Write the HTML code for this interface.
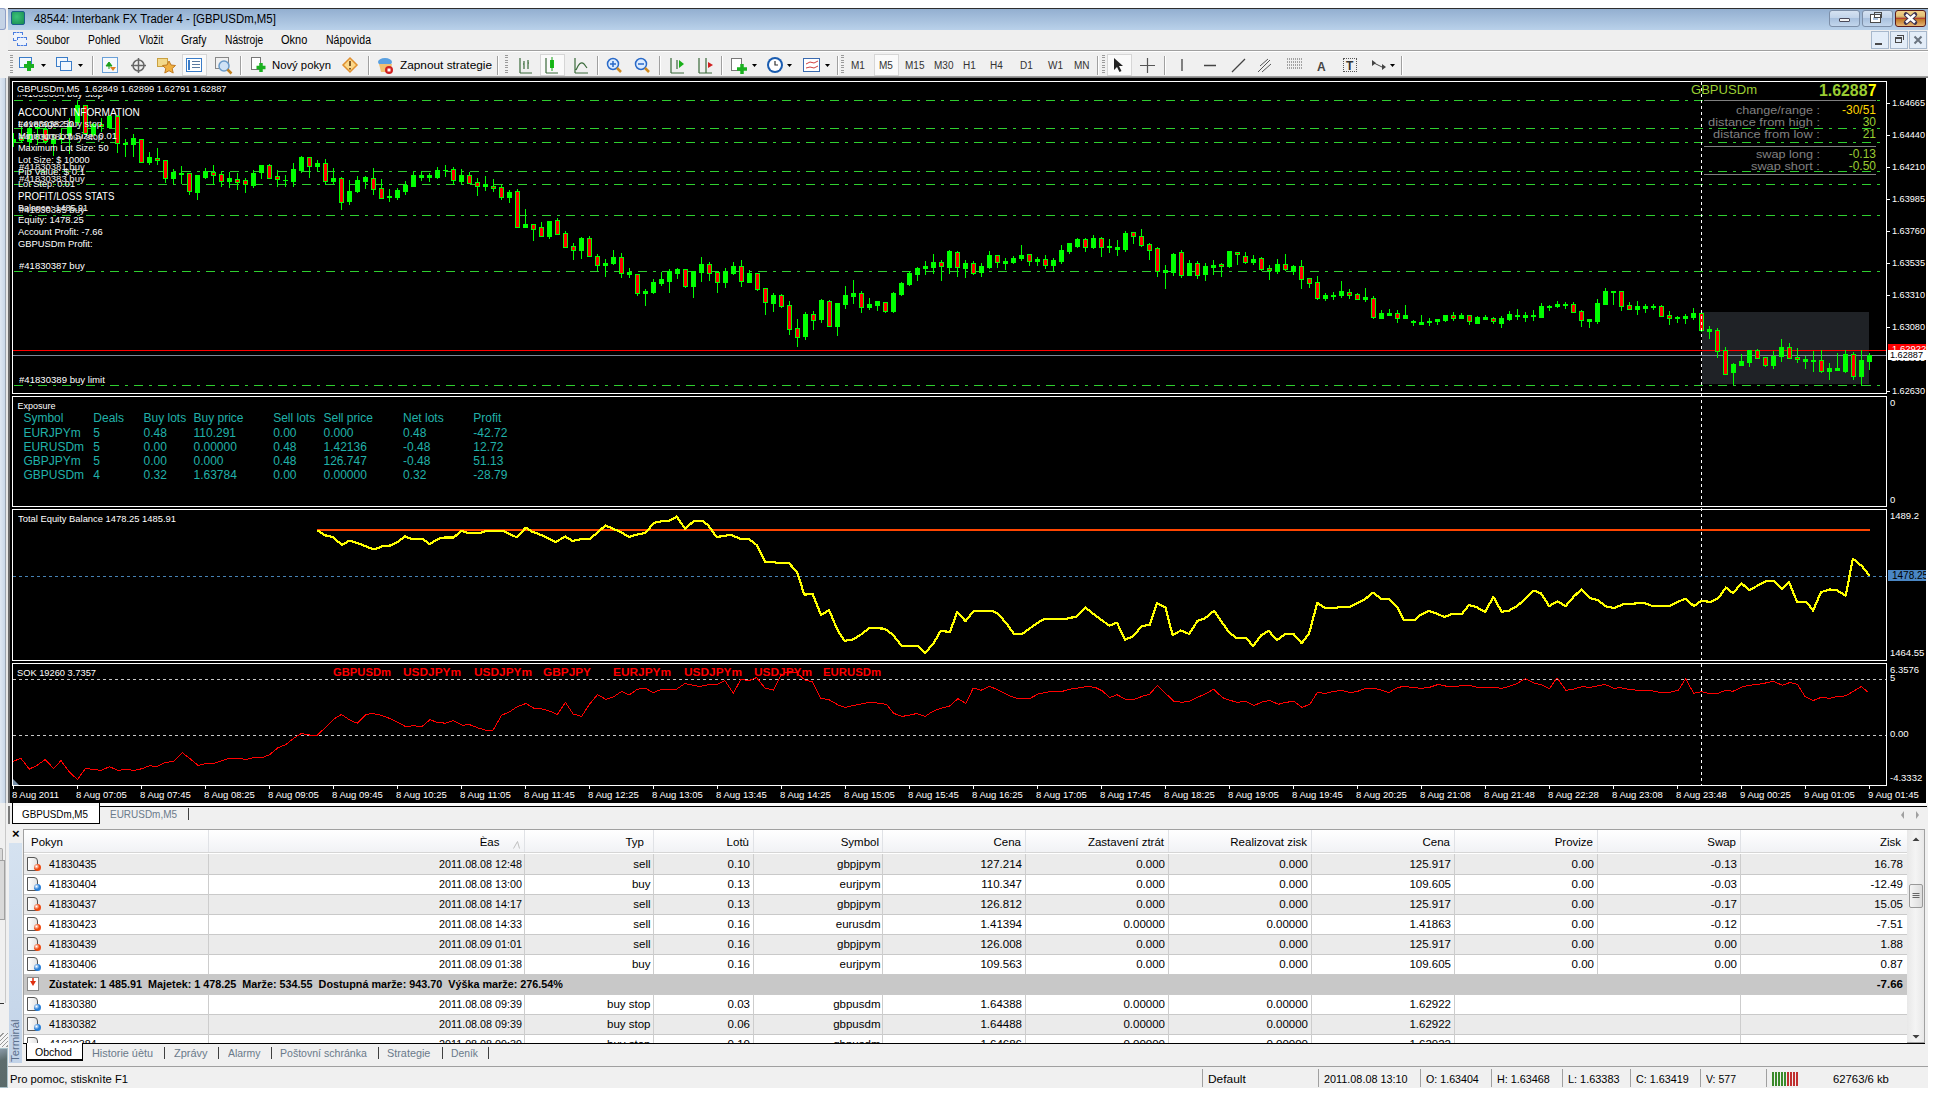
<!DOCTYPE html>
<html><head><meta charset="utf-8"><title>MT4</title><style>*{box-sizing:border-box}
html,body{margin:0;padding:0}
body{width:1936px;height:1096px;background:#fff;position:relative;overflow:hidden;font-family:"Liberation Sans",sans-serif;color:#000}
.a{position:absolute}
.t{position:absolute;white-space:pre;line-height:1;transform-origin:0 0}
svg{position:absolute;left:0;top:0;overflow:visible}
</style></head><body>
<div class="a" style="left:0px;top:8px;width:8px;height:1080px;background:#f0f0f0"></div>
<div class="a" style="left:0px;top:848px;width:3px;height:22px;background:#d8d8d8;border:1px solid #a8a8a8;border-left:none;border-radius:0 2px 2px 0"></div>
<div class="a" style="left:0px;top:1003px;width:4px;height:1px;background:#333"></div>
<div class="a" style="left:5px;top:803px;width:1px;height:200px;background:#c8c8c8"></div>
<div class="a" style="left:0px;top:8px;width:6px;height:22px;background:#c4d3e6;border:1px solid #8e9fc6;border-left:none;border-radius:0 3px 3px 0"></div>
<div class="a" style="left:0px;top:78px;width:5px;height:725px;background:linear-gradient(90deg,#dfe8f3,#c9d7e8)"></div>
<div class="a" style="left:5px;top:78px;width:1px;height:725px;background:#9aa4b0"></div>
<div class="a" style="left:6px;top:78px;width:2px;height:725px;background:#e6e6e6"></div>
<div class="a" style="left:8px;top:78px;width:2px;height:725px;background:#6a6a6a"></div>
<div class="a" style="left:0px;top:860px;width:5px;height:60px;background:#d9d9d9;border:1px solid #a0a0a0;border-left:none"></div>
<div class="a" style="left:0px;top:1033px;width:8px;height:14px;background:repeating-linear-gradient(135deg,#f4f4f4 0 2px,#9a9a9a 2px 3px)"></div>
<div class="a" style="left:0px;top:1048px;width:8px;height:40px;background:linear-gradient(160deg,#8a9aa8 0,#5d6d6d 30%,#5a6a6a 100%);border:1px solid #a8c0c8;border-left:none"></div>
<div class="a" style="left:8px;top:8px;width:1920px;height:1px;background:#2e2e2e"></div>
<div class="a" style="left:8px;top:9px;width:1920px;height:21px;background:linear-gradient(#93afd0,#b9d1ea)"></div>
<div class="a" style="left:11px;top:11px;width:14px;height:14px;background:radial-gradient(circle at 40% 40%,#3cc27a,#178a4e);border:1px solid #1c5f8a;border-radius:2px"></div>
<div class="t" style="left:34.00px;top:12.84px;font-size:12px;color:#000;transform:scaleX(0.9491);">48544: Interbank FX Trader 4 - [GBPUSDm,M5]</div>
<div class="a" style="left:1829px;top:10px;width:31px;height:17px;background:linear-gradient(#d5e2f1 0%,#c2d4ea 45%,#a9c1de 50%,#c3d6ec 100%);border:1px solid #7d8fa8;border-radius:3px"></div>
<div class="a" style="left:1839px;top:18px;width:11px;height:4px;background:#f4f4f4;border:1px solid #4a4a5a;border-radius:1px"></div>
<div class="a" style="left:1862px;top:10px;width:31px;height:17px;background:linear-gradient(#d5e2f1 0%,#c2d4ea 45%,#a9c1de 50%,#c3d6ec 100%);border:1px solid #7d8fa8;border-radius:3px"></div>
<div class="a" style="left:1871px;top:15px;width:9px;height:7px;border:2px solid #fff;outline:1px solid #4a4a4a"></div>
<div class="a" style="left:1874px;top:12px;width:8px;height:6px;border:1px solid #4a4a4a;background:transparent"></div>
<div class="a" style="left:1895px;top:10px;width:31px;height:17px;background:linear-gradient(#f0d08a 0%,#e6c37a 30%,#c8a868 42%,#b8402a 46%,#b8402a 52%,#c07828 56%,#d49850 80%,#e8b878 100%);border:1px solid #5a1a1a;border-radius:3px"></div>
<svg width="1936" height="1096"><path d="M1906 14.5 L1915 22.5 M1915 14.5 L1906 22.5" stroke="#3a3050" stroke-width="4.5" stroke-linecap="round"/><path d="M1906 14.5 L1915 22.5 M1915 14.5 L1906 22.5" stroke="#fff" stroke-width="2.6"/></svg>
<div class="a" style="left:8px;top:30px;width:1920px;height:20px;background:#efefef"></div>
<div class="a" style="left:8px;top:50px;width:1920px;height:1px;background:#a0a0a0"></div>
<div class="a" style="left:13px;top:32px;width:10px;height:9px;border:1px dashed #4a7de0;background:#eef3fb"></div>
<div class="a" style="left:17px;top:37px;width:10px;height:9px;border:1px dashed #4a7de0;background:#eef3fb"></div>
<div class="t" style="left:36.00px;top:34.34px;font-size:12px;color:#000;transform:scaleX(0.8657);">Soubor</div>
<div class="t" style="left:88.00px;top:34.34px;font-size:12px;color:#000;transform:scaleX(0.8618);">Pohled</div>
<div class="t" style="left:139.00px;top:34.34px;font-size:12px;color:#000;transform:scaleX(0.8281);">Vložit</div>
<div class="t" style="left:181.00px;top:34.34px;font-size:12px;color:#000;transform:scaleX(0.8624);">Grafy</div>
<div class="t" style="left:225.00px;top:34.34px;font-size:12px;color:#000;transform:scaleX(0.8549);">Nástroje</div>
<div class="t" style="left:281.00px;top:34.34px;font-size:12px;color:#000;transform:scaleX(0.9170);">Okno</div>
<div class="t" style="left:326.00px;top:34.34px;font-size:12px;color:#000;transform:scaleX(0.8760);">Nápovìda</div>
<div class="a" style="left:1871px;top:31px;width:18px;height:18px;background:#e3edf8;border:1px solid #a7b8cc"></div>
<div class="a" style="left:1890px;top:31px;width:18px;height:18px;background:#e3edf8;border:1px solid #a7b8cc"></div>
<div class="a" style="left:1909px;top:31px;width:18px;height:18px;background:#e3edf8;border:1px solid #a7b8cc"></div>
<div class="a" style="left:1875px;top:43px;width:7px;height:2px;background:#4a4a4a"></div>
<div class="a" style="left:1895px;top:37px;width:7px;height:6px;border:1px solid #4a4a4a;border-top-width:2px"></div>
<div class="a" style="left:1897px;top:35px;width:7px;height:5px;border:1px solid #4a4a4a;border-left:none;border-bottom:none"></div>
<svg width="1936" height="1096"><path d="M1914.5 36.5 L1921.5 43.5 M1921.5 36.5 L1914.5 43.5" stroke="#6a7480" stroke-width="2"/></svg>
<div class="a" style="left:8px;top:51px;width:1920px;height:1px;background:#fff"></div>
<div class="a" style="left:8px;top:52px;width:1920px;height:25px;background:#f0f0f0"></div>
<div class="a" style="left:8px;top:76px;width:1920px;height:2px;background:linear-gradient(#b0b0b0,#707070)"></div>
<div class="a" style="left:10px;top:55px;width:3px;height:20px;background:repeating-linear-gradient(#9a9a9a 0 1px,transparent 1px 2.5px)"></div>
<div class="a" style="left:19px;top:57px;width:13px;height:11px;border:1.5px solid #3a7cc8;background:#f2f7fd"></div>
<svg width="1936" height="1096"><path d="M29 61 v10 M24 66 h10" stroke="#19b01f" stroke-width="4"/></svg>
<svg width="1936" height="1096"><path d="M41 64 h5 l-2.5 3 z" fill="#000"/></svg>
<div class="a" style="left:56px;top:57px;width:12px;height:10px;border:1.5px solid #3a7cc8;background:#f2f7fd"></div>
<div class="a" style="left:60px;top:61px;width:12px;height:10px;border:1.5px solid #3a7cc8;background:#f2f7fd"></div>
<svg width="1936" height="1096"><path d="M78 64 h5 l-2.5 3 z" fill="#000"/></svg>
<div class="a" style="left:92px;top:56px;width:1px;height:19px;background:#a0a0a0"></div>
<div class="a" style="left:93px;top:56px;width:1px;height:19px;background:#fff"></div>
<div class="a" style="left:102px;top:57px;width:16px;height:16px;border:1.5px solid #6aa0d8;background:#f4f8fc"></div>
<svg width="1936" height="1096"><path d="M106 66 l3-4 l3 4 z M109 66 v3" fill="#1aa01a" stroke="#1aa01a"/><path d="M110 67 l3 4 l3-4 z" fill="#e08020"/></svg>
<svg width="1936" height="1096"><circle cx="138.5" cy="65.5" r="5.5" fill="none" stroke="#666" stroke-width="1.5"/><path d="M131 65.5 h15 M138.5 58 v15" stroke="#666" stroke-width="1.5"/></svg>
<div class="a" style="left:157px;top:58px;width:11px;height:9px;background:#f3d98a;border:1px solid #c9a040"></div>
<svg width="1936" height="1096"><path d="M169 61 l2 4 4.5 .5 -3.3 3 1 4.5 -4.2-2.3 -4.2 2.3 1-4.5 -3.3-3 4.5-.5z" fill="#f0b040" stroke="#c07a20" stroke-width="1"/></svg>
<div class="a" style="left:182px;top:54px;width:25px;height:22px;background:#fafafa;border:1px solid #d6d6d6"></div>
<div class="a" style="left:186px;top:58px;width:16px;height:14px;border:1.5px solid #3a7cc8;background:#fff"></div>
<div class="a" style="left:188px;top:60px;width:2px;height:10px;background:#3a7cc8"></div>
<svg width="1936" height="1096"><path d="M192 61.5 h8 M192 64.5 h8 M192 67.5 h8" stroke="#5a7aa0"/></svg>
<div class="a" style="left:215px;top:57px;width:14px;height:12px;border:1px solid #888;background:#f0f0f0"></div>
<svg width="1936" height="1096"><circle cx="224" cy="66" r="5" fill="#cfe2f5" stroke="#6a9ac8" stroke-width="1.5"/><path d="M227.5 69.5 l4 4" stroke="#c08020" stroke-width="2.5"/></svg>
<div class="a" style="left:240px;top:56px;width:1px;height:19px;background:#a0a0a0"></div>
<div class="a" style="left:241px;top:56px;width:1px;height:19px;background:#fff"></div>
<div class="a" style="left:251px;top:57px;width:10px;height:13px;border:1px solid #777;background:#fff"></div>
<svg width="1936" height="1096"><path d="M261 63 v9 M256.5 67.5 h9" stroke="#19b01f" stroke-width="3.5"/></svg>
<div class="t" style="left:272.00px;top:60.27px;font-size:11.5px;color:#000;transform:scaleX(0.9820);">Nový pokyn</div>
<svg width="1936" height="1096"><path d="M350 58 l7 7 -7 7 -7-7z" fill="#fbd88a" stroke="#e09030" stroke-width="1.5"/><path d="M350 61 v5 M350 68 v1.5" stroke="#603000" stroke-width="1.5"/></svg>
<div class="a" style="left:368px;top:56px;width:1px;height:19px;background:#a0a0a0"></div>
<div class="a" style="left:369px;top:56px;width:1px;height:19px;background:#fff"></div>
<svg width="1936" height="1096"><ellipse cx="385" cy="62" rx="7" ry="4" fill="#5aa0e0"/><path d="M379 64 l2 8 h9 l2-8z" fill="#f0c070"/><circle cx="389" cy="70" r="4" fill="#d02020"/><rect x="387.5" y="68.5" width="3" height="3" fill="#fff"/></svg>
<div class="t" style="left:400.00px;top:60.27px;font-size:11.5px;color:#000;transform:scaleX(1.0279);">Zapnout strategie</div>
<div class="a" style="left:497px;top:56px;width:1px;height:19px;background:#a0a0a0"></div>
<div class="a" style="left:498px;top:56px;width:1px;height:19px;background:#fff"></div>
<div class="a" style="left:505px;top:55px;width:3px;height:20px;background:repeating-linear-gradient(#9a9a9a 0 1px,transparent 1px 2.5px)"></div>
<svg width="1936" height="1096"><path d="M520 58 v15 M520 73 h12 M524 61 v8 M528 60 v9 M523 64 h1 M528 63 h1" stroke="#3a6a3a" stroke-width="1.2" fill="none"/></svg>
<div class="a" style="left:540px;top:54px;width:25px;height:22px;background:#fafafa;border:1px solid #d6d6d6"></div>
<svg width="1936" height="1096"><path d="M546 58 v15 M546 73 h12" stroke="#3a6a3a" stroke-width="1.2"/><rect x="550" y="60" width="4" height="8" fill="#19c019"/><path d="M552 57 v14" stroke="#19a019"/></svg>
<svg width="1936" height="1096"><path d="M575 58 v15 M575 73 h13 M576 70 q4-10 8-6 l3 4" stroke="#3a6a3a" stroke-width="1.2" fill="none"/></svg>
<div class="a" style="left:597px;top:56px;width:1px;height:19px;background:#a0a0a0"></div>
<div class="a" style="left:598px;top:56px;width:1px;height:19px;background:#fff"></div>
<svg width="1936" height="1096"><circle cx="613" cy="64" r="5.5" fill="#dcecff" stroke="#2a6ac8" stroke-width="1.5"/><path d="M610 64 h6 M613 61 v6" stroke="#2a6ac8" stroke-width="1.5"/><path d="M617 68 l4 4" stroke="#d08a20" stroke-width="2.5"/></svg>
<svg width="1936" height="1096"><circle cx="641" cy="64" r="5.5" fill="#dcecff" stroke="#2a6ac8" stroke-width="1.5"/><path d="M638 64 h6" stroke="#2a6ac8" stroke-width="1.5"/><path d="M645 68 l4 4" stroke="#d08a20" stroke-width="2.5"/></svg>
<div class="a" style="left:659px;top:56px;width:1px;height:19px;background:#a0a0a0"></div>
<div class="a" style="left:660px;top:56px;width:1px;height:19px;background:#fff"></div>
<svg width="1936" height="1096"><path d="M671 58 v15 M671 73 h13 M677 60 v9" stroke="#3a6a3a" stroke-width="1.2"/><path d="M679 60 l5 4 -5 4z" fill="#19b019"/></svg>
<svg width="1936" height="1096"><path d="M699 58 v15 M699 73 h13 M706 58 v15" stroke="#3a6a3a" stroke-width="1.2"/><path d="M713 65 l-5-3 v6z" fill="#d02020"/></svg>
<div class="a" style="left:721px;top:56px;width:1px;height:19px;background:#a0a0a0"></div>
<div class="a" style="left:722px;top:56px;width:1px;height:19px;background:#fff"></div>
<div class="a" style="left:731px;top:58px;width:11px;height:13px;border:1px solid #777;background:#fff"></div>
<svg width="1936" height="1096"><path d="M742 64 v10 M737 69 h10" stroke="#19b01f" stroke-width="3.5"/></svg>
<svg width="1936" height="1096"><path d="M752 64 h5 l-2.5 3 z" fill="#000"/></svg>
<svg width="1936" height="1096"><circle cx="775" cy="65" r="8" fill="#1a5cb0"/><circle cx="775" cy="65" r="6" fill="#fff"/><path d="M775 61 v4 h3" stroke="#333" stroke-width="1.2" fill="none"/></svg>
<svg width="1936" height="1096"><path d="M787 64 h5 l-2.5 3 z" fill="#000"/></svg>
<div class="a" style="left:803px;top:58px;width:17px;height:14px;border:1.5px solid #3a6ab0;background:#fff"></div>
<svg width="1936" height="1096"><path d="M806 64 l4-2 4 1 4-2 M806 68 l4-1 4 1 4-2" stroke="#d04040" fill="none"/></svg>
<svg width="1936" height="1096"><path d="M825 64 h5 l-2.5 3 z" fill="#000"/></svg>
<div class="a" style="left:837px;top:56px;width:1px;height:19px;background:#a0a0a0"></div>
<div class="a" style="left:838px;top:56px;width:1px;height:19px;background:#fff"></div>
<div class="a" style="left:841px;top:55px;width:3px;height:20px;background:repeating-linear-gradient(#9a9a9a 0 1px,transparent 1px 2.5px)"></div>
<div class="a" style="left:874px;top:54px;width:25px;height:22px;background:#fafafa;border:1px solid #d6d6d6"></div>
<div class="t" style="left:851.00px;top:60.53px;font-size:10px;color:#333;">M1</div>
<div class="t" style="left:879.00px;top:60.53px;font-size:10px;color:#333;">M5</div>
<div class="t" style="left:905.00px;top:60.53px;font-size:10px;color:#333;">M15</div>
<div class="t" style="left:934.00px;top:60.53px;font-size:10px;color:#333;">M30</div>
<div class="t" style="left:963.00px;top:60.53px;font-size:10px;color:#333;">H1</div>
<div class="t" style="left:990.00px;top:60.53px;font-size:10px;color:#333;">H4</div>
<div class="t" style="left:1020.00px;top:60.53px;font-size:10px;color:#333;">D1</div>
<div class="t" style="left:1048.00px;top:60.53px;font-size:10px;color:#333;">W1</div>
<div class="t" style="left:1074.00px;top:60.53px;font-size:10px;color:#333;">MN</div>
<div class="a" style="left:1097px;top:56px;width:1px;height:19px;background:#a0a0a0"></div>
<div class="a" style="left:1098px;top:56px;width:1px;height:19px;background:#fff"></div>
<div class="a" style="left:1102px;top:55px;width:3px;height:20px;background:repeating-linear-gradient(#9a9a9a 0 1px,transparent 1px 2.5px)"></div>
<div class="a" style="left:1107px;top:54px;width:25px;height:22px;background:#fafafa;border:1px solid #d6d6d6"></div>
<svg width="1936" height="1096"><path d="M1114 58 v12 l3-3 2.5 5 2-1 -2.5-5 h4z" fill="#222"/></svg>
<svg width="1936" height="1096"><path d="M1140 65.5 h15 M1147.5 58 v15" stroke="#555" stroke-width="1.2"/></svg>
<div class="a" style="left:1164px;top:56px;width:1px;height:19px;background:#a0a0a0"></div>
<div class="a" style="left:1165px;top:56px;width:1px;height:19px;background:#fff"></div>
<svg width="1936" height="1096"><path d="M1182 59 v12 M1204 65.5 h12 M1232 72 l13-13" stroke="#444" stroke-width="1.3"/><path d="M1258 72 l12-12 M1260 66 l8-7 M1262 72 l9-8" stroke="#555" stroke-width="1"/><path d="M1287 59 h15 M1287 62 h15 M1287 65 h15 M1287 68 h15" stroke="#555" stroke-width="1" stroke-dasharray="1 1"/></svg>
<div class="t" style="left:1317.00px;top:60.84px;font-size:12px;color:#444;font-weight:700;">A</div>
<div class="a" style="left:1343px;top:58px;width:14px;height:14px;border:1px dotted #555"></div>
<div class="t" style="left:1346.00px;top:59.84px;font-size:12px;color:#333;font-weight:700;">T</div>
<svg width="1936" height="1096"><path d="M1372 60 l4 3 -4 3z M1382 64 l4 3 -4 3z" fill="#444"/><path d="M1374 63 l8 4" stroke="#444"/></svg>
<svg width="1936" height="1096"><path d="M1390 64 h5 l-2.5 3 z" fill="#000"/></svg>
<div class="a" style="left:1401px;top:56px;width:1px;height:19px;background:#a0a0a0"></div>
<div class="a" style="left:1402px;top:56px;width:1px;height:19px;background:#fff"></div>
<div class="a" style="left:10px;top:78px;width:1916px;height:725px;background:#000"></div>
<div class="a" style="left:12px;top:81px;width:1875px;height:313px;border:1px solid #fff"></div>
<div class="a" style="left:12px;top:396px;width:1875px;height:111px;border:1px solid #fff"></div>
<div class="a" style="left:12px;top:509px;width:1875px;height:152px;border:1px solid #fff"></div>
<div class="a" style="left:12px;top:663px;width:1875px;height:123px;border:1px solid #fff"></div>
<svg width="1936" height="1096" shape-rendering="crispEdges"><rect x="1702" y="312" width="167" height="72" fill="#1f2226"/><line x1="14" y1="100.5" x2="1886" y2="100.5" stroke="#2fcf2f" stroke-width="1" stroke-dasharray="9 6 3 6"/><line x1="14" y1="128.5" x2="1886" y2="128.5" stroke="#2fcf2f" stroke-width="1" stroke-dasharray="9 6 3 6"/><line x1="14" y1="142.5" x2="1886" y2="142.5" stroke="#2fcf2f" stroke-width="1" stroke-dasharray="9 6 3 6"/><line x1="14" y1="171.5" x2="1886" y2="171.5" stroke="#2fcf2f" stroke-width="1" stroke-dasharray="9 6 3 6"/><line x1="14" y1="184.5" x2="1886" y2="184.5" stroke="#2fcf2f" stroke-width="1" stroke-dasharray="9 6 3 6"/><line x1="14" y1="215.5" x2="1886" y2="215.5" stroke="#2fcf2f" stroke-width="1" stroke-dasharray="9 6 3 6"/><line x1="14" y1="271.5" x2="1886" y2="271.5" stroke="#2fcf2f" stroke-width="1" stroke-dasharray="9 6 3 6"/><line x1="14" y1="385.5" x2="1886" y2="385.5" stroke="#2fcf2f" stroke-width="1" stroke-dasharray="9 6 3 6"/><rect x="13" y="350" width="1873" height="1" fill="#ff0000"/><rect x="13" y="355" width="1873" height="1" fill="#7d8796"/><rect x="13" y="133" width="1" height="14" fill="#00ff00"/><rect x="13" y="139" width="3" height="3" fill="#00ff00"/><rect x="21" y="127" width="1" height="16" fill="#00ff00"/><rect x="19" y="138" width="5" height="3" fill="#00ff00"/><rect x="20" y="139" width="3" height="1" fill="#ff0000"/><rect x="29" y="127" width="1" height="20" fill="#00ff00"/><rect x="27" y="128" width="5" height="14" fill="#00ff00"/><rect x="37" y="124" width="1" height="21" fill="#00ff00"/><rect x="35" y="127" width="5" height="2" fill="#00ff00"/><rect x="45" y="126" width="1" height="18" fill="#00ff00"/><rect x="43" y="129" width="5" height="13" fill="#00ff00"/><rect x="44" y="130" width="3" height="11" fill="#ff0000"/><rect x="53" y="134" width="1" height="22" fill="#00ff00"/><rect x="51" y="139" width="5" height="5" fill="#00ff00"/><rect x="61" y="128" width="1" height="16" fill="#00ff00"/><rect x="59" y="138" width="5" height="2" fill="#00ff00"/><rect x="69" y="118" width="1" height="36" fill="#00ff00"/><rect x="67" y="126" width="5" height="10" fill="#00ff00"/><rect x="77" y="100" width="1" height="26" fill="#00ff00"/><rect x="75" y="105" width="5" height="18" fill="#00ff00"/><rect x="85" y="105" width="1" height="29" fill="#00ff00"/><rect x="83" y="105" width="5" height="29" fill="#00ff00"/><rect x="84" y="106" width="3" height="27" fill="#ff0000"/><rect x="93" y="123" width="1" height="13" fill="#00ff00"/><rect x="91" y="124" width="5" height="11" fill="#00ff00"/><rect x="101" y="118" width="1" height="14" fill="#00ff00"/><rect x="99" y="124" width="5" height="3" fill="#00ff00"/><rect x="100" y="125" width="3" height="1" fill="#ff0000"/><rect x="109" y="115" width="1" height="14" fill="#00ff00"/><rect x="107" y="116" width="5" height="12" fill="#00ff00"/><rect x="117" y="115" width="1" height="38" fill="#00ff00"/><rect x="115" y="116" width="5" height="28" fill="#00ff00"/><rect x="116" y="117" width="3" height="26" fill="#ff0000"/><rect x="125" y="139" width="1" height="18" fill="#00ff00"/><rect x="123" y="143" width="5" height="2" fill="#00ff00"/><rect x="133" y="134" width="1" height="23" fill="#00ff00"/><rect x="131" y="138" width="5" height="7" fill="#00ff00"/><rect x="141" y="139" width="1" height="24" fill="#00ff00"/><rect x="139" y="139" width="5" height="24" fill="#00ff00"/><rect x="140" y="140" width="3" height="22" fill="#ff0000"/><rect x="149" y="152" width="1" height="13" fill="#00ff00"/><rect x="147" y="157" width="5" height="6" fill="#00ff00"/><rect x="157" y="148" width="1" height="17" fill="#00ff00"/><rect x="155" y="158" width="5" height="3" fill="#00ff00"/><rect x="156" y="159" width="3" height="1" fill="#ff0000"/><rect x="165" y="160" width="1" height="23" fill="#00ff00"/><rect x="163" y="160" width="5" height="19" fill="#00ff00"/><rect x="164" y="161" width="3" height="17" fill="#ff0000"/><rect x="173" y="169" width="1" height="15" fill="#00ff00"/><rect x="171" y="172" width="5" height="7" fill="#00ff00"/><rect x="181" y="166" width="1" height="18" fill="#00ff00"/><rect x="179" y="173" width="5" height="2" fill="#00ff00"/><rect x="189" y="173" width="1" height="22" fill="#00ff00"/><rect x="187" y="173" width="5" height="19" fill="#00ff00"/><rect x="188" y="174" width="3" height="17" fill="#ff0000"/><rect x="197" y="175" width="1" height="25" fill="#00ff00"/><rect x="195" y="175" width="5" height="18" fill="#00ff00"/><rect x="205" y="168" width="1" height="11" fill="#00ff00"/><rect x="203" y="171" width="5" height="7" fill="#00ff00"/><rect x="213" y="165" width="1" height="20" fill="#00ff00"/><rect x="211" y="172" width="5" height="4" fill="#00ff00"/><rect x="212" y="173" width="3" height="2" fill="#ff0000"/><rect x="221" y="171" width="1" height="16" fill="#00ff00"/><rect x="219" y="174" width="5" height="8" fill="#00ff00"/><rect x="220" y="175" width="3" height="6" fill="#ff0000"/><rect x="229" y="172" width="1" height="16" fill="#00ff00"/><rect x="227" y="178" width="5" height="4" fill="#00ff00"/><rect x="237" y="173" width="1" height="17" fill="#00ff00"/><rect x="235" y="179" width="5" height="4" fill="#00ff00"/><rect x="236" y="180" width="3" height="2" fill="#ff0000"/><rect x="245" y="178" width="1" height="15" fill="#00ff00"/><rect x="243" y="180" width="5" height="5" fill="#00ff00"/><rect x="244" y="181" width="3" height="3" fill="#ff0000"/><rect x="253" y="170" width="1" height="18" fill="#00ff00"/><rect x="251" y="173" width="5" height="13" fill="#00ff00"/><rect x="261" y="165" width="1" height="14" fill="#00ff00"/><rect x="259" y="165" width="5" height="8" fill="#00ff00"/><rect x="269" y="164" width="1" height="15" fill="#00ff00"/><rect x="267" y="165" width="5" height="14" fill="#00ff00"/><rect x="268" y="166" width="3" height="12" fill="#ff0000"/><rect x="277" y="170" width="1" height="17" fill="#00ff00"/><rect x="275" y="176" width="5" height="4" fill="#00ff00"/><rect x="276" y="177" width="3" height="2" fill="#ff0000"/><rect x="285" y="175" width="1" height="12" fill="#00ff00"/><rect x="283" y="180" width="5" height="1" fill="#00ff00"/><rect x="293" y="163" width="1" height="24" fill="#00ff00"/><rect x="291" y="169" width="5" height="13" fill="#00ff00"/><rect x="301" y="156" width="1" height="17" fill="#00ff00"/><rect x="299" y="157" width="5" height="14" fill="#00ff00"/><rect x="309" y="157" width="1" height="21" fill="#00ff00"/><rect x="307" y="157" width="5" height="10" fill="#00ff00"/><rect x="308" y="158" width="3" height="8" fill="#ff0000"/><rect x="317" y="160" width="1" height="11" fill="#00ff00"/><rect x="315" y="163" width="5" height="4" fill="#00ff00"/><rect x="325" y="159" width="1" height="26" fill="#00ff00"/><rect x="323" y="163" width="5" height="19" fill="#00ff00"/><rect x="324" y="164" width="3" height="17" fill="#ff0000"/><rect x="333" y="168" width="1" height="17" fill="#00ff00"/><rect x="331" y="178" width="5" height="4" fill="#00ff00"/><rect x="341" y="177" width="1" height="33" fill="#00ff00"/><rect x="339" y="178" width="5" height="25" fill="#00ff00"/><rect x="340" y="179" width="3" height="23" fill="#ff0000"/><rect x="349" y="180" width="1" height="25" fill="#00ff00"/><rect x="347" y="191" width="5" height="11" fill="#00ff00"/><rect x="357" y="176" width="1" height="17" fill="#00ff00"/><rect x="355" y="180" width="5" height="12" fill="#00ff00"/><rect x="365" y="176" width="1" height="13" fill="#00ff00"/><rect x="363" y="177" width="5" height="5" fill="#00ff00"/><rect x="373" y="168" width="1" height="27" fill="#00ff00"/><rect x="371" y="178" width="5" height="12" fill="#00ff00"/><rect x="372" y="179" width="3" height="10" fill="#ff0000"/><rect x="381" y="179" width="1" height="20" fill="#00ff00"/><rect x="379" y="188" width="5" height="11" fill="#00ff00"/><rect x="380" y="189" width="3" height="9" fill="#ff0000"/><rect x="389" y="189" width="1" height="13" fill="#00ff00"/><rect x="387" y="196" width="5" height="2" fill="#00ff00"/><rect x="397" y="188" width="1" height="12" fill="#00ff00"/><rect x="395" y="190" width="5" height="8" fill="#00ff00"/><rect x="405" y="181" width="1" height="14" fill="#00ff00"/><rect x="403" y="185" width="5" height="7" fill="#00ff00"/><rect x="413" y="171" width="1" height="16" fill="#00ff00"/><rect x="411" y="175" width="5" height="12" fill="#00ff00"/><rect x="421" y="171" width="1" height="10" fill="#00ff00"/><rect x="419" y="175" width="5" height="3" fill="#00ff00"/><rect x="429" y="173" width="1" height="9" fill="#00ff00"/><rect x="427" y="175" width="5" height="3" fill="#00ff00"/><rect x="437" y="167" width="1" height="12" fill="#00ff00"/><rect x="435" y="170" width="5" height="8" fill="#00ff00"/><rect x="445" y="165" width="1" height="12" fill="#00ff00"/><rect x="443" y="170" width="5" height="1" fill="#00ff00"/><rect x="453" y="167" width="1" height="18" fill="#00ff00"/><rect x="451" y="169" width="5" height="12" fill="#00ff00"/><rect x="452" y="170" width="3" height="10" fill="#ff0000"/><rect x="461" y="169" width="1" height="15" fill="#00ff00"/><rect x="459" y="175" width="5" height="7" fill="#00ff00"/><rect x="469" y="172" width="1" height="12" fill="#00ff00"/><rect x="467" y="175" width="5" height="9" fill="#00ff00"/><rect x="468" y="176" width="3" height="7" fill="#ff0000"/><rect x="477" y="178" width="1" height="18" fill="#00ff00"/><rect x="475" y="182" width="5" height="5" fill="#00ff00"/><rect x="476" y="183" width="3" height="3" fill="#ff0000"/><rect x="485" y="176" width="1" height="15" fill="#00ff00"/><rect x="483" y="184" width="5" height="3" fill="#00ff00"/><rect x="493" y="179" width="1" height="13" fill="#00ff00"/><rect x="491" y="186" width="5" height="3" fill="#00ff00"/><rect x="492" y="187" width="3" height="1" fill="#ff0000"/><rect x="501" y="185" width="1" height="15" fill="#00ff00"/><rect x="499" y="187" width="5" height="11" fill="#00ff00"/><rect x="500" y="188" width="3" height="9" fill="#ff0000"/><rect x="509" y="190" width="1" height="13" fill="#00ff00"/><rect x="507" y="192" width="5" height="6" fill="#00ff00"/><rect x="517" y="189" width="1" height="39" fill="#00ff00"/><rect x="515" y="191" width="5" height="37" fill="#00ff00"/><rect x="516" y="192" width="3" height="35" fill="#ff0000"/><rect x="525" y="209" width="1" height="19" fill="#00ff00"/><rect x="523" y="224" width="5" height="4" fill="#00ff00"/><rect x="533" y="224" width="1" height="17" fill="#00ff00"/><rect x="531" y="224" width="5" height="6" fill="#00ff00"/><rect x="532" y="225" width="3" height="4" fill="#ff0000"/><rect x="541" y="222" width="1" height="15" fill="#00ff00"/><rect x="539" y="227" width="5" height="10" fill="#00ff00"/><rect x="540" y="228" width="3" height="8" fill="#ff0000"/><rect x="549" y="221" width="1" height="18" fill="#00ff00"/><rect x="547" y="221" width="5" height="16" fill="#00ff00"/><rect x="557" y="218" width="1" height="17" fill="#00ff00"/><rect x="555" y="220" width="5" height="15" fill="#00ff00"/><rect x="556" y="221" width="3" height="13" fill="#ff0000"/><rect x="565" y="231" width="1" height="17" fill="#00ff00"/><rect x="563" y="233" width="5" height="15" fill="#00ff00"/><rect x="564" y="234" width="3" height="13" fill="#ff0000"/><rect x="573" y="243" width="1" height="17" fill="#00ff00"/><rect x="571" y="246" width="5" height="5" fill="#00ff00"/><rect x="572" y="247" width="3" height="3" fill="#ff0000"/><rect x="581" y="237" width="1" height="22" fill="#00ff00"/><rect x="579" y="238" width="5" height="13" fill="#00ff00"/><rect x="589" y="236" width="1" height="21" fill="#00ff00"/><rect x="587" y="238" width="5" height="19" fill="#00ff00"/><rect x="588" y="239" width="3" height="17" fill="#ff0000"/><rect x="597" y="254" width="1" height="17" fill="#00ff00"/><rect x="595" y="256" width="5" height="10" fill="#00ff00"/><rect x="596" y="257" width="3" height="8" fill="#ff0000"/><rect x="605" y="259" width="1" height="18" fill="#00ff00"/><rect x="603" y="263" width="5" height="3" fill="#00ff00"/><rect x="613" y="250" width="1" height="15" fill="#00ff00"/><rect x="611" y="257" width="5" height="7" fill="#00ff00"/><rect x="621" y="253" width="1" height="25" fill="#00ff00"/><rect x="619" y="257" width="5" height="17" fill="#00ff00"/><rect x="620" y="258" width="3" height="15" fill="#ff0000"/><rect x="629" y="268" width="1" height="10" fill="#00ff00"/><rect x="627" y="272" width="5" height="3" fill="#00ff00"/><rect x="637" y="274" width="1" height="22" fill="#00ff00"/><rect x="635" y="274" width="5" height="20" fill="#00ff00"/><rect x="636" y="275" width="3" height="18" fill="#ff0000"/><rect x="645" y="289" width="1" height="17" fill="#00ff00"/><rect x="643" y="291" width="5" height="3" fill="#00ff00"/><rect x="653" y="279" width="1" height="15" fill="#00ff00"/><rect x="651" y="282" width="5" height="11" fill="#00ff00"/><rect x="661" y="272" width="1" height="14" fill="#00ff00"/><rect x="659" y="279" width="5" height="5" fill="#00ff00"/><rect x="669" y="269" width="1" height="24" fill="#00ff00"/><rect x="667" y="271" width="5" height="11" fill="#00ff00"/><rect x="677" y="268" width="1" height="11" fill="#00ff00"/><rect x="675" y="269" width="5" height="5" fill="#00ff00"/><rect x="685" y="269" width="1" height="19" fill="#00ff00"/><rect x="683" y="269" width="5" height="18" fill="#00ff00"/><rect x="684" y="270" width="3" height="16" fill="#ff0000"/><rect x="693" y="271" width="1" height="27" fill="#00ff00"/><rect x="691" y="271" width="5" height="16" fill="#00ff00"/><rect x="701" y="257" width="1" height="25" fill="#00ff00"/><rect x="699" y="264" width="5" height="9" fill="#00ff00"/><rect x="709" y="262" width="1" height="19" fill="#00ff00"/><rect x="707" y="264" width="5" height="10" fill="#00ff00"/><rect x="708" y="265" width="3" height="8" fill="#ff0000"/><rect x="717" y="271" width="1" height="22" fill="#00ff00"/><rect x="715" y="272" width="5" height="11" fill="#00ff00"/><rect x="716" y="273" width="3" height="9" fill="#ff0000"/><rect x="725" y="268" width="1" height="20" fill="#00ff00"/><rect x="723" y="271" width="5" height="12" fill="#00ff00"/><rect x="733" y="262" width="1" height="13" fill="#00ff00"/><rect x="731" y="266" width="5" height="8" fill="#00ff00"/><rect x="741" y="260" width="1" height="27" fill="#00ff00"/><rect x="739" y="266" width="5" height="16" fill="#00ff00"/><rect x="740" y="267" width="3" height="14" fill="#ff0000"/><rect x="749" y="270" width="1" height="13" fill="#00ff00"/><rect x="747" y="273" width="5" height="10" fill="#00ff00"/><rect x="757" y="273" width="1" height="18" fill="#00ff00"/><rect x="755" y="273" width="5" height="17" fill="#00ff00"/><rect x="756" y="274" width="3" height="15" fill="#ff0000"/><rect x="765" y="288" width="1" height="27" fill="#00ff00"/><rect x="763" y="288" width="5" height="15" fill="#00ff00"/><rect x="764" y="289" width="3" height="13" fill="#ff0000"/><rect x="773" y="293" width="1" height="19" fill="#00ff00"/><rect x="771" y="295" width="5" height="9" fill="#00ff00"/><rect x="781" y="294" width="1" height="14" fill="#00ff00"/><rect x="779" y="295" width="5" height="12" fill="#00ff00"/><rect x="780" y="296" width="3" height="10" fill="#ff0000"/><rect x="789" y="301" width="1" height="34" fill="#00ff00"/><rect x="787" y="305" width="5" height="25" fill="#00ff00"/><rect x="788" y="306" width="3" height="23" fill="#ff0000"/><rect x="797" y="319" width="1" height="28" fill="#00ff00"/><rect x="795" y="328" width="5" height="10" fill="#00ff00"/><rect x="796" y="329" width="3" height="8" fill="#ff0000"/><rect x="805" y="312" width="1" height="28" fill="#00ff00"/><rect x="803" y="314" width="5" height="23" fill="#00ff00"/><rect x="813" y="311" width="1" height="19" fill="#00ff00"/><rect x="811" y="314" width="5" height="7" fill="#00ff00"/><rect x="812" y="315" width="3" height="5" fill="#ff0000"/><rect x="821" y="299" width="1" height="24" fill="#00ff00"/><rect x="819" y="300" width="5" height="20" fill="#00ff00"/><rect x="829" y="300" width="1" height="27" fill="#00ff00"/><rect x="827" y="301" width="5" height="26" fill="#00ff00"/><rect x="828" y="302" width="3" height="24" fill="#ff0000"/><rect x="837" y="303" width="1" height="33" fill="#00ff00"/><rect x="835" y="303" width="5" height="24" fill="#00ff00"/><rect x="845" y="286" width="1" height="23" fill="#00ff00"/><rect x="843" y="295" width="5" height="10" fill="#00ff00"/><rect x="853" y="280" width="1" height="24" fill="#00ff00"/><rect x="851" y="293" width="5" height="4" fill="#00ff00"/><rect x="861" y="291" width="1" height="22" fill="#00ff00"/><rect x="859" y="293" width="5" height="15" fill="#00ff00"/><rect x="860" y="294" width="3" height="13" fill="#ff0000"/><rect x="869" y="298" width="1" height="12" fill="#00ff00"/><rect x="867" y="304" width="5" height="4" fill="#00ff00"/><rect x="877" y="301" width="1" height="10" fill="#00ff00"/><rect x="875" y="301" width="5" height="5" fill="#00ff00"/><rect x="885" y="302" width="1" height="11" fill="#00ff00"/><rect x="883" y="302" width="5" height="10" fill="#00ff00"/><rect x="884" y="303" width="3" height="8" fill="#ff0000"/><rect x="893" y="292" width="1" height="21" fill="#00ff00"/><rect x="891" y="293" width="5" height="19" fill="#00ff00"/><rect x="901" y="282" width="1" height="14" fill="#00ff00"/><rect x="899" y="283" width="5" height="12" fill="#00ff00"/><rect x="909" y="271" width="1" height="15" fill="#00ff00"/><rect x="907" y="273" width="5" height="12" fill="#00ff00"/><rect x="917" y="267" width="1" height="14" fill="#00ff00"/><rect x="915" y="268" width="5" height="7" fill="#00ff00"/><rect x="925" y="261" width="1" height="14" fill="#00ff00"/><rect x="923" y="266" width="5" height="3" fill="#00ff00"/><rect x="933" y="254" width="1" height="20" fill="#00ff00"/><rect x="931" y="262" width="5" height="6" fill="#00ff00"/><rect x="941" y="260" width="1" height="21" fill="#00ff00"/><rect x="939" y="262" width="5" height="5" fill="#00ff00"/><rect x="940" y="263" width="3" height="3" fill="#ff0000"/><rect x="949" y="250" width="1" height="24" fill="#00ff00"/><rect x="947" y="251" width="5" height="17" fill="#00ff00"/><rect x="957" y="251" width="1" height="26" fill="#00ff00"/><rect x="955" y="252" width="5" height="16" fill="#00ff00"/><rect x="956" y="253" width="3" height="14" fill="#ff0000"/><rect x="965" y="260" width="1" height="18" fill="#00ff00"/><rect x="963" y="263" width="5" height="6" fill="#00ff00"/><rect x="973" y="261" width="1" height="14" fill="#00ff00"/><rect x="971" y="263" width="5" height="11" fill="#00ff00"/><rect x="972" y="264" width="3" height="9" fill="#ff0000"/><rect x="981" y="263" width="1" height="14" fill="#00ff00"/><rect x="979" y="266" width="5" height="7" fill="#00ff00"/><rect x="989" y="251" width="1" height="18" fill="#00ff00"/><rect x="987" y="255" width="5" height="13" fill="#00ff00"/><rect x="997" y="255" width="1" height="13" fill="#00ff00"/><rect x="995" y="255" width="5" height="8" fill="#00ff00"/><rect x="996" y="256" width="3" height="6" fill="#ff0000"/><rect x="1005" y="258" width="1" height="12" fill="#00ff00"/><rect x="1003" y="261" width="5" height="3" fill="#00ff00"/><rect x="1013" y="256" width="1" height="8" fill="#00ff00"/><rect x="1011" y="258" width="5" height="5" fill="#00ff00"/><rect x="1021" y="245" width="1" height="16" fill="#00ff00"/><rect x="1019" y="255" width="5" height="4" fill="#00ff00"/><rect x="1029" y="254" width="1" height="12" fill="#00ff00"/><rect x="1027" y="254" width="5" height="8" fill="#00ff00"/><rect x="1028" y="255" width="3" height="6" fill="#ff0000"/><rect x="1037" y="257" width="1" height="9" fill="#00ff00"/><rect x="1035" y="259" width="5" height="3" fill="#00ff00"/><rect x="1045" y="255" width="1" height="14" fill="#00ff00"/><rect x="1043" y="259" width="5" height="7" fill="#00ff00"/><rect x="1044" y="260" width="3" height="5" fill="#ff0000"/><rect x="1053" y="258" width="1" height="13" fill="#00ff00"/><rect x="1051" y="260" width="5" height="6" fill="#00ff00"/><rect x="1061" y="245" width="1" height="19" fill="#00ff00"/><rect x="1059" y="250" width="5" height="12" fill="#00ff00"/><rect x="1069" y="243" width="1" height="11" fill="#00ff00"/><rect x="1067" y="243" width="5" height="9" fill="#00ff00"/><rect x="1077" y="238" width="1" height="10" fill="#00ff00"/><rect x="1075" y="239" width="5" height="8" fill="#00ff00"/><rect x="1085" y="238" width="1" height="14" fill="#00ff00"/><rect x="1083" y="239" width="5" height="9" fill="#00ff00"/><rect x="1084" y="240" width="3" height="7" fill="#ff0000"/><rect x="1093" y="235" width="1" height="14" fill="#00ff00"/><rect x="1091" y="238" width="5" height="10" fill="#00ff00"/><rect x="1101" y="237" width="1" height="20" fill="#00ff00"/><rect x="1099" y="238" width="5" height="10" fill="#00ff00"/><rect x="1100" y="239" width="3" height="8" fill="#ff0000"/><rect x="1109" y="239" width="1" height="14" fill="#00ff00"/><rect x="1107" y="246" width="5" height="2" fill="#00ff00"/><rect x="1117" y="240" width="1" height="16" fill="#00ff00"/><rect x="1115" y="247" width="5" height="3" fill="#00ff00"/><rect x="1125" y="231" width="1" height="21" fill="#00ff00"/><rect x="1123" y="233" width="5" height="17" fill="#00ff00"/><rect x="1133" y="232" width="1" height="12" fill="#00ff00"/><rect x="1131" y="232" width="5" height="5" fill="#00ff00"/><rect x="1132" y="233" width="3" height="3" fill="#ff0000"/><rect x="1141" y="229" width="1" height="18" fill="#00ff00"/><rect x="1139" y="236" width="5" height="10" fill="#00ff00"/><rect x="1140" y="237" width="3" height="8" fill="#ff0000"/><rect x="1149" y="243" width="1" height="17" fill="#00ff00"/><rect x="1147" y="244" width="5" height="7" fill="#00ff00"/><rect x="1148" y="245" width="3" height="5" fill="#ff0000"/><rect x="1157" y="247" width="1" height="30" fill="#00ff00"/><rect x="1155" y="248" width="5" height="24" fill="#00ff00"/><rect x="1156" y="249" width="3" height="22" fill="#ff0000"/><rect x="1165" y="265" width="1" height="24" fill="#00ff00"/><rect x="1163" y="270" width="5" height="3" fill="#00ff00"/><rect x="1173" y="253" width="1" height="23" fill="#00ff00"/><rect x="1171" y="254" width="5" height="19" fill="#00ff00"/><rect x="1181" y="250" width="1" height="28" fill="#00ff00"/><rect x="1179" y="252" width="5" height="24" fill="#00ff00"/><rect x="1180" y="253" width="3" height="22" fill="#ff0000"/><rect x="1189" y="260" width="1" height="16" fill="#00ff00"/><rect x="1187" y="263" width="5" height="13" fill="#00ff00"/><rect x="1197" y="261" width="1" height="18" fill="#00ff00"/><rect x="1195" y="263" width="5" height="13" fill="#00ff00"/><rect x="1196" y="264" width="3" height="11" fill="#ff0000"/><rect x="1205" y="263" width="1" height="18" fill="#00ff00"/><rect x="1203" y="266" width="5" height="9" fill="#00ff00"/><rect x="1213" y="260" width="1" height="15" fill="#00ff00"/><rect x="1211" y="265" width="5" height="3" fill="#00ff00"/><rect x="1221" y="263" width="1" height="14" fill="#00ff00"/><rect x="1219" y="264" width="5" height="3" fill="#00ff00"/><rect x="1220" y="265" width="3" height="1" fill="#ff0000"/><rect x="1229" y="251" width="1" height="17" fill="#00ff00"/><rect x="1227" y="251" width="5" height="16" fill="#00ff00"/><rect x="1237" y="252" width="1" height="13" fill="#00ff00"/><rect x="1235" y="252" width="5" height="3" fill="#00ff00"/><rect x="1236" y="253" width="3" height="1" fill="#ff0000"/><rect x="1245" y="252" width="1" height="12" fill="#00ff00"/><rect x="1243" y="256" width="5" height="7" fill="#00ff00"/><rect x="1244" y="257" width="3" height="5" fill="#ff0000"/><rect x="1253" y="255" width="1" height="10" fill="#00ff00"/><rect x="1251" y="259" width="5" height="4" fill="#00ff00"/><rect x="1261" y="257" width="1" height="14" fill="#00ff00"/><rect x="1259" y="258" width="5" height="12" fill="#00ff00"/><rect x="1260" y="259" width="3" height="10" fill="#ff0000"/><rect x="1269" y="265" width="1" height="15" fill="#00ff00"/><rect x="1267" y="268" width="5" height="3" fill="#00ff00"/><rect x="1268" y="269" width="3" height="1" fill="#ff0000"/><rect x="1277" y="259" width="1" height="15" fill="#00ff00"/><rect x="1275" y="264" width="5" height="8" fill="#00ff00"/><rect x="1285" y="254" width="1" height="17" fill="#00ff00"/><rect x="1283" y="264" width="5" height="6" fill="#00ff00"/><rect x="1284" y="265" width="3" height="4" fill="#ff0000"/><rect x="1293" y="265" width="1" height="10" fill="#00ff00"/><rect x="1291" y="266" width="5" height="6" fill="#00ff00"/><rect x="1301" y="260" width="1" height="29" fill="#00ff00"/><rect x="1299" y="266" width="5" height="14" fill="#00ff00"/><rect x="1300" y="267" width="3" height="12" fill="#ff0000"/><rect x="1309" y="278" width="1" height="10" fill="#00ff00"/><rect x="1307" y="278" width="5" height="6" fill="#00ff00"/><rect x="1308" y="279" width="3" height="4" fill="#ff0000"/><rect x="1317" y="276" width="1" height="24" fill="#00ff00"/><rect x="1315" y="282" width="5" height="17" fill="#00ff00"/><rect x="1316" y="283" width="3" height="15" fill="#ff0000"/><rect x="1325" y="293" width="1" height="8" fill="#00ff00"/><rect x="1323" y="295" width="5" height="4" fill="#00ff00"/><rect x="1333" y="292" width="1" height="8" fill="#00ff00"/><rect x="1331" y="295" width="5" height="2" fill="#00ff00"/><rect x="1341" y="281" width="1" height="17" fill="#00ff00"/><rect x="1339" y="291" width="5" height="5" fill="#00ff00"/><rect x="1349" y="289" width="1" height="10" fill="#00ff00"/><rect x="1347" y="292" width="5" height="4" fill="#00ff00"/><rect x="1348" y="293" width="3" height="2" fill="#ff0000"/><rect x="1357" y="293" width="1" height="7" fill="#00ff00"/><rect x="1355" y="294" width="5" height="6" fill="#00ff00"/><rect x="1356" y="295" width="3" height="4" fill="#ff0000"/><rect x="1365" y="288" width="1" height="14" fill="#00ff00"/><rect x="1363" y="297" width="5" height="3" fill="#00ff00"/><rect x="1373" y="296" width="1" height="23" fill="#00ff00"/><rect x="1371" y="298" width="5" height="20" fill="#00ff00"/><rect x="1372" y="299" width="3" height="18" fill="#ff0000"/><rect x="1381" y="310" width="1" height="9" fill="#00ff00"/><rect x="1379" y="313" width="5" height="6" fill="#00ff00"/><rect x="1389" y="309" width="1" height="7" fill="#00ff00"/><rect x="1387" y="313" width="5" height="3" fill="#00ff00"/><rect x="1397" y="310" width="1" height="13" fill="#00ff00"/><rect x="1395" y="313" width="5" height="6" fill="#00ff00"/><rect x="1396" y="314" width="3" height="4" fill="#ff0000"/><rect x="1405" y="305" width="1" height="14" fill="#00ff00"/><rect x="1403" y="315" width="5" height="4" fill="#00ff00"/><rect x="1413" y="320" width="1" height="6" fill="#00ff00"/><rect x="1411" y="321" width="5" height="2" fill="#00ff00"/><rect x="1421" y="315" width="1" height="10" fill="#00ff00"/><rect x="1419" y="322" width="5" height="3" fill="#00ff00"/><rect x="1429" y="318" width="1" height="8" fill="#00ff00"/><rect x="1427" y="321" width="5" height="2" fill="#00ff00"/><rect x="1437" y="319" width="1" height="6" fill="#00ff00"/><rect x="1435" y="319" width="5" height="3" fill="#00ff00"/><rect x="1445" y="315" width="1" height="7" fill="#00ff00"/><rect x="1443" y="315" width="5" height="6" fill="#00ff00"/><rect x="1453" y="312" width="1" height="9" fill="#00ff00"/><rect x="1451" y="315" width="5" height="4" fill="#00ff00"/><rect x="1452" y="316" width="3" height="2" fill="#ff0000"/><rect x="1461" y="313" width="1" height="6" fill="#00ff00"/><rect x="1459" y="315" width="5" height="4" fill="#00ff00"/><rect x="1469" y="315" width="1" height="10" fill="#00ff00"/><rect x="1467" y="315" width="5" height="7" fill="#00ff00"/><rect x="1468" y="316" width="3" height="5" fill="#ff0000"/><rect x="1477" y="316" width="1" height="8" fill="#00ff00"/><rect x="1475" y="317" width="5" height="7" fill="#00ff00"/><rect x="1485" y="315" width="1" height="5" fill="#00ff00"/><rect x="1483" y="317" width="5" height="3" fill="#00ff00"/><rect x="1493" y="317" width="1" height="7" fill="#00ff00"/><rect x="1491" y="318" width="5" height="4" fill="#00ff00"/><rect x="1492" y="319" width="3" height="2" fill="#ff0000"/><rect x="1501" y="316" width="1" height="12" fill="#00ff00"/><rect x="1499" y="318" width="5" height="6" fill="#00ff00"/><rect x="1509" y="311" width="1" height="10" fill="#00ff00"/><rect x="1507" y="314" width="5" height="6" fill="#00ff00"/><rect x="1517" y="309" width="1" height="11" fill="#00ff00"/><rect x="1515" y="315" width="5" height="2" fill="#00ff00"/><rect x="1525" y="312" width="1" height="10" fill="#00ff00"/><rect x="1523" y="315" width="5" height="3" fill="#00ff00"/><rect x="1533" y="310" width="1" height="11" fill="#00ff00"/><rect x="1531" y="315" width="5" height="2" fill="#00ff00"/><rect x="1541" y="303" width="1" height="15" fill="#00ff00"/><rect x="1539" y="306" width="5" height="12" fill="#00ff00"/><rect x="1549" y="305" width="1" height="6" fill="#00ff00"/><rect x="1547" y="306" width="5" height="2" fill="#00ff00"/><rect x="1557" y="301" width="1" height="7" fill="#00ff00"/><rect x="1555" y="304" width="5" height="3" fill="#00ff00"/><rect x="1565" y="302" width="1" height="7" fill="#00ff00"/><rect x="1563" y="304" width="5" height="2" fill="#00ff00"/><rect x="1573" y="302" width="1" height="11" fill="#00ff00"/><rect x="1571" y="304" width="5" height="9" fill="#00ff00"/><rect x="1572" y="305" width="3" height="7" fill="#ff0000"/><rect x="1581" y="310" width="1" height="17" fill="#00ff00"/><rect x="1579" y="311" width="5" height="10" fill="#00ff00"/><rect x="1580" y="312" width="3" height="8" fill="#ff0000"/><rect x="1589" y="319" width="1" height="9" fill="#00ff00"/><rect x="1587" y="319" width="5" height="3" fill="#00ff00"/><rect x="1597" y="299" width="1" height="25" fill="#00ff00"/><rect x="1595" y="303" width="5" height="19" fill="#00ff00"/><rect x="1605" y="288" width="1" height="17" fill="#00ff00"/><rect x="1603" y="291" width="5" height="14" fill="#00ff00"/><rect x="1613" y="291" width="1" height="14" fill="#00ff00"/><rect x="1611" y="291" width="5" height="2" fill="#00ff00"/><rect x="1621" y="291" width="1" height="20" fill="#00ff00"/><rect x="1619" y="291" width="5" height="16" fill="#00ff00"/><rect x="1620" y="292" width="3" height="14" fill="#ff0000"/><rect x="1629" y="302" width="1" height="8" fill="#00ff00"/><rect x="1627" y="305" width="5" height="5" fill="#00ff00"/><rect x="1628" y="306" width="3" height="3" fill="#ff0000"/><rect x="1637" y="301" width="1" height="14" fill="#00ff00"/><rect x="1635" y="306" width="5" height="4" fill="#00ff00"/><rect x="1645" y="304" width="1" height="9" fill="#00ff00"/><rect x="1643" y="306" width="5" height="3" fill="#00ff00"/><rect x="1653" y="304" width="1" height="6" fill="#00ff00"/><rect x="1651" y="306" width="5" height="2" fill="#00ff00"/><rect x="1661" y="305" width="1" height="12" fill="#00ff00"/><rect x="1659" y="306" width="5" height="11" fill="#00ff00"/><rect x="1660" y="307" width="3" height="9" fill="#ff0000"/><rect x="1669" y="311" width="1" height="14" fill="#00ff00"/><rect x="1667" y="315" width="5" height="4" fill="#00ff00"/><rect x="1668" y="316" width="3" height="2" fill="#ff0000"/><rect x="1677" y="316" width="1" height="7" fill="#00ff00"/><rect x="1675" y="317" width="5" height="2" fill="#00ff00"/><rect x="1685" y="314" width="1" height="10" fill="#00ff00"/><rect x="1683" y="316" width="5" height="3" fill="#00ff00"/><rect x="1693" y="308" width="1" height="12" fill="#00ff00"/><rect x="1691" y="313" width="5" height="5" fill="#00ff00"/><rect x="1701" y="312" width="1" height="20" fill="#00ff00"/><rect x="1699" y="313" width="5" height="18" fill="#00ff00"/><rect x="1700" y="314" width="3" height="16" fill="#ff0000"/><rect x="1709" y="326" width="1" height="13" fill="#00ff00"/><rect x="1707" y="329" width="5" height="3" fill="#00ff00"/><rect x="1717" y="328" width="1" height="30" fill="#00ff00"/><rect x="1715" y="330" width="5" height="22" fill="#00ff00"/><rect x="1716" y="331" width="3" height="20" fill="#ff0000"/><rect x="1725" y="347" width="1" height="28" fill="#00ff00"/><rect x="1723" y="350" width="5" height="25" fill="#00ff00"/><rect x="1724" y="351" width="3" height="23" fill="#ff0000"/><rect x="1733" y="363" width="1" height="22" fill="#00ff00"/><rect x="1731" y="364" width="5" height="9" fill="#00ff00"/><rect x="1741" y="354" width="1" height="12" fill="#00ff00"/><rect x="1739" y="361" width="5" height="5" fill="#00ff00"/><rect x="1749" y="350" width="1" height="17" fill="#00ff00"/><rect x="1747" y="350" width="5" height="13" fill="#00ff00"/><rect x="1757" y="349" width="1" height="10" fill="#00ff00"/><rect x="1755" y="350" width="5" height="9" fill="#00ff00"/><rect x="1756" y="351" width="3" height="7" fill="#ff0000"/><rect x="1765" y="357" width="1" height="10" fill="#00ff00"/><rect x="1763" y="357" width="5" height="9" fill="#00ff00"/><rect x="1764" y="358" width="3" height="7" fill="#ff0000"/><rect x="1773" y="351" width="1" height="18" fill="#00ff00"/><rect x="1771" y="356" width="5" height="10" fill="#00ff00"/><rect x="1781" y="339" width="1" height="23" fill="#00ff00"/><rect x="1779" y="347" width="5" height="10" fill="#00ff00"/><rect x="1789" y="343" width="1" height="16" fill="#00ff00"/><rect x="1787" y="347" width="5" height="12" fill="#00ff00"/><rect x="1788" y="348" width="3" height="10" fill="#ff0000"/><rect x="1797" y="348" width="1" height="15" fill="#00ff00"/><rect x="1795" y="357" width="5" height="3" fill="#00ff00"/><rect x="1796" y="358" width="3" height="1" fill="#ff0000"/><rect x="1805" y="356" width="1" height="13" fill="#00ff00"/><rect x="1803" y="359" width="5" height="3" fill="#00ff00"/><rect x="1813" y="351" width="1" height="21" fill="#00ff00"/><rect x="1811" y="360" width="5" height="2" fill="#00ff00"/><rect x="1821" y="350" width="1" height="23" fill="#00ff00"/><rect x="1819" y="360" width="5" height="12" fill="#00ff00"/><rect x="1820" y="361" width="3" height="10" fill="#ff0000"/><rect x="1829" y="363" width="1" height="17" fill="#00ff00"/><rect x="1827" y="368" width="5" height="4" fill="#00ff00"/><rect x="1837" y="353" width="1" height="18" fill="#00ff00"/><rect x="1835" y="368" width="5" height="3" fill="#00ff00"/><rect x="1845" y="350" width="1" height="23" fill="#00ff00"/><rect x="1843" y="354" width="5" height="18" fill="#00ff00"/><rect x="1853" y="352" width="1" height="28" fill="#00ff00"/><rect x="1851" y="354" width="5" height="23" fill="#00ff00"/><rect x="1852" y="355" width="3" height="21" fill="#ff0000"/><rect x="1861" y="350" width="1" height="36" fill="#00ff00"/><rect x="1859" y="360" width="5" height="17" fill="#00ff00"/><rect x="1869" y="353" width="1" height="17" fill="#00ff00"/><rect x="1867" y="355" width="5" height="7" fill="#00ff00"/><line x1="1701.5" y1="82" x2="1701.5" y2="785" stroke="#fff" stroke-width="1" stroke-dasharray="3 3"/><rect x="1704" y="100" width="172" height="1" fill="#808080"/><rect x="1704" y="146" width="172" height="1" fill="#808080"/><rect x="1704" y="174" width="172" height="1" fill="#808080"/><rect x="1887" y="103" width="3" height="1" fill="#fff"/><rect x="1887" y="135" width="3" height="1" fill="#fff"/><rect x="1887" y="167" width="3" height="1" fill="#fff"/><rect x="1887" y="199" width="3" height="1" fill="#fff"/><rect x="1887" y="231" width="3" height="1" fill="#fff"/><rect x="1887" y="263" width="3" height="1" fill="#fff"/><rect x="1887" y="295" width="3" height="1" fill="#fff"/><rect x="1887" y="327" width="3" height="1" fill="#fff"/><rect x="1887" y="391" width="3" height="1" fill="#fff"/><rect x="13" y="786" width="1" height="3" fill="#fff"/><rect x="77" y="786" width="1" height="3" fill="#fff"/><rect x="141" y="786" width="1" height="3" fill="#fff"/><rect x="205" y="786" width="1" height="3" fill="#fff"/><rect x="269" y="786" width="1" height="3" fill="#fff"/><rect x="333" y="786" width="1" height="3" fill="#fff"/><rect x="397" y="786" width="1" height="3" fill="#fff"/><rect x="461" y="786" width="1" height="3" fill="#fff"/><rect x="525" y="786" width="1" height="3" fill="#fff"/><rect x="589" y="786" width="1" height="3" fill="#fff"/><rect x="653" y="786" width="1" height="3" fill="#fff"/><rect x="717" y="786" width="1" height="3" fill="#fff"/><rect x="781" y="786" width="1" height="3" fill="#fff"/><rect x="845" y="786" width="1" height="3" fill="#fff"/><rect x="909" y="786" width="1" height="3" fill="#fff"/><rect x="973" y="786" width="1" height="3" fill="#fff"/><rect x="1037" y="786" width="1" height="3" fill="#fff"/><rect x="1101" y="786" width="1" height="3" fill="#fff"/><rect x="1165" y="786" width="1" height="3" fill="#fff"/><rect x="1229" y="786" width="1" height="3" fill="#fff"/><rect x="1293" y="786" width="1" height="3" fill="#fff"/><rect x="1357" y="786" width="1" height="3" fill="#fff"/><rect x="1421" y="786" width="1" height="3" fill="#fff"/><rect x="1485" y="786" width="1" height="3" fill="#fff"/><rect x="1549" y="786" width="1" height="3" fill="#fff"/><rect x="1613" y="786" width="1" height="3" fill="#fff"/><rect x="1677" y="786" width="1" height="3" fill="#fff"/><rect x="1741" y="786" width="1" height="3" fill="#fff"/><rect x="1805" y="786" width="1" height="3" fill="#fff"/><rect x="1869" y="786" width="1" height="3" fill="#fff"/></svg>
<div class="t" style="left:1892.00px;top:98.46px;font-size:9.5px;color:#fff;transform:scaleX(0.9610);">1.64665</div>
<div class="t" style="left:1892.00px;top:130.46px;font-size:9.5px;color:#fff;transform:scaleX(0.9610);">1.64440</div>
<div class="t" style="left:1892.00px;top:162.46px;font-size:9.5px;color:#fff;transform:scaleX(0.9610);">1.64210</div>
<div class="t" style="left:1892.00px;top:194.46px;font-size:9.5px;color:#fff;transform:scaleX(0.9610);">1.63985</div>
<div class="t" style="left:1892.00px;top:226.46px;font-size:9.5px;color:#fff;transform:scaleX(0.9610);">1.63760</div>
<div class="t" style="left:1892.00px;top:258.46px;font-size:9.5px;color:#fff;transform:scaleX(0.9610);">1.63535</div>
<div class="t" style="left:1892.00px;top:290.46px;font-size:9.5px;color:#fff;transform:scaleX(0.9610);">1.63310</div>
<div class="t" style="left:1892.00px;top:322.46px;font-size:9.5px;color:#fff;transform:scaleX(0.9610);">1.63080</div>
<div class="t" style="left:1892.00px;top:386.46px;font-size:9.5px;color:#fff;transform:scaleX(0.9610);">1.62630</div>
<div class="a" style="left:1888px;top:356px;width:38px;height:7px;overflow:hidden"><div class="t" style="left:3px;top:-3px;font-size:9.5px;color:#fff">1.62855</div></div>
<div class="a" style="left:1888px;top:344px;width:38px;height:6px;background:#ff0000;overflow:hidden"><div class="t" style="left:4px;top:0px;font-size:9.5px;color:#fff">1.62922</div></div>
<div class="a" style="left:1888px;top:350px;width:38px;height:10px;background:#fff"></div>
<div class="t" style="left:1890.00px;top:350.46px;font-size:9.5px;color:#000;transform:scaleX(0.9610);">1.62887</div>
<div class="a" style="left:14px;top:95px;width:200px;height:5px;overflow:hidden"><div class="t" style="left:3px;top:-6.5px;font-size:9.5px;color:#fff">#41830384 buy stop</div></div>
<div class="t" style="left:17.00px;top:85.38px;font-size:9px;color:#fff;transform:scaleX(1.0313);">GBPUSDm,M5  1.62849 1.62899 1.62791 1.62887</div>
<div class="t" style="left:18.00px;top:106.61px;font-size:10.5px;color:#fff;transform:scaleX(0.9565);">ACCOUNT INFORMATION</div>
<div class="t" style="left:18.00px;top:119.46px;font-size:9.5px;color:#fff;transform:scaleX(1.0097);">Leverage: 50</div>
<div class="t" style="left:18.00px;top:118.96px;font-size:9.5px;color:#eee;transform:scaleX(0.9756);">#41830382 buy stop</div>
<div class="t" style="left:18.00px;top:131.36px;font-size:9.5px;color:#fff;transform:scaleX(0.9974);">Minimum Lot Size: 0.01</div>
<div class="t" style="left:19.00px;top:131.96px;font-size:9.5px;color:#ddd;transform:scaleX(0.9756);">#41830380 buy stop</div>
<div class="t" style="left:18.00px;top:143.46px;font-size:9.5px;color:#fff;transform:scaleX(0.9630);">Maximum Lot Size: 50</div>
<div class="t" style="left:18.00px;top:155.46px;font-size:9.5px;color:#fff;transform:scaleX(0.9669);">Lot Size: $ 10000</div>
<div class="t" style="left:19.00px;top:161.96px;font-size:9.5px;color:#eee;transform:scaleX(1.0029);">#41830381 buy</div>
<div class="t" style="left:18.00px;top:167.46px;font-size:9.5px;color:#fff;transform:scaleX(1.0095);">Pip Value: $ 0.1</div>
<div class="t" style="left:19.00px;top:173.96px;font-size:9.5px;color:#eee;transform:scaleX(1.0029);">#41830383 buy</div>
<div class="t" style="left:18.00px;top:179.46px;font-size:9.5px;color:#fff;transform:scaleX(0.9635);">Lot Step: 0.01</div>
<div class="t" style="left:18.00px;top:190.61px;font-size:10.5px;color:#fff;transform:scaleX(0.9214);">PROFIT/LOSS STATS</div>
<div class="t" style="left:18.00px;top:203.46px;font-size:9.5px;color:#fff;transform:scaleX(0.9466);">Balance: 1485.91</div>
<div class="t" style="left:19.00px;top:204.96px;font-size:9.5px;color:#eee;transform:scaleX(1.0029);">#41830385 buy</div>
<div class="t" style="left:18.00px;top:215.46px;font-size:9.5px;color:#fff;transform:scaleX(0.9951);">Equity: 1478.25</div>
<div class="t" style="left:18.00px;top:227.46px;font-size:9.5px;color:#fff;transform:scaleX(0.9841);">Account Profit: -7.66</div>
<div class="t" style="left:18.00px;top:239.46px;font-size:9.5px;color:#fff;transform:scaleX(0.9869);">GBPUSDm Profit:</div>
<div class="t" style="left:19.00px;top:261.46px;font-size:9.5px;color:#fff;transform:scaleX(1.0029);">#41830387 buy</div>
<div class="t" style="left:19.00px;top:375.46px;font-size:9.5px;color:#fff;transform:scaleX(1.0090);">#41830389 buy limit</div>
<div class="t" style="left:1691.00px;top:84.02px;font-size:12.5px;color:#9acd32;transform:scaleX(1.0443);">GBPUSDm</div>
<div class="t" style="left:1819.00px;top:83.26px;font-size:16px;color:#9acd32;font-weight:700;transform:scaleX(0.9911);">1.6288</div>
<div class="t" style="left:1867.50px;top:83.26px;font-size:16px;color:#ffff00;font-weight:700;transform:scaleX(0.9552);">7</div>
<div class="t" style="left:1736.00px;top:105.19px;font-size:11px;color:#808080;transform:scaleX(1.1446);">change/range :</div>
<div class="t" style="left:1841.97px;top:104.34px;font-size:12px;color:#ffd700;">-30/51</div>
<div class="t" style="left:1708.00px;top:117.19px;font-size:11px;color:#808080;transform:scaleX(1.1668);">distance from high :</div>
<div class="t" style="left:1862.65px;top:116.34px;font-size:12px;color:#9acd32;">30</div>
<div class="t" style="left:1713.20px;top:129.19px;font-size:11px;color:#808080;transform:scaleX(1.1647);">distance from low :</div>
<div class="t" style="left:1862.65px;top:128.34px;font-size:12px;color:#9acd32;">21</div>
<div class="t" style="left:1756.00px;top:149.19px;font-size:11px;color:#808080;transform:scaleX(1.1502);">swap long :</div>
<div class="t" style="left:1848.65px;top:148.34px;font-size:12px;color:#9acd32;">-0.13</div>
<div class="t" style="left:1751.10px;top:161.19px;font-size:11px;color:#808080;transform:scaleX(1.1618);">swap short :</div>
<div class="t" style="left:1848.65px;top:160.34px;font-size:12px;color:#9acd32;">-0.50</div>
<div class="t" style="left:17.50px;top:401.88px;font-size:9px;color:#fff;">Exposure</div>
<div class="t" style="left:23.40px;top:412.34px;font-size:12px;color:#20b2aa;">Symbol</div>
<div class="t" style="left:93.30px;top:412.34px;font-size:12px;color:#20b2aa;">Deals</div>
<div class="t" style="left:143.50px;top:412.34px;font-size:12px;color:#20b2aa;">Buy lots</div>
<div class="t" style="left:193.50px;top:412.34px;font-size:12px;color:#20b2aa;">Buy price</div>
<div class="t" style="left:273.20px;top:412.34px;font-size:12px;color:#20b2aa;">Sell lots</div>
<div class="t" style="left:323.50px;top:412.34px;font-size:12px;color:#20b2aa;">Sell price</div>
<div class="t" style="left:403.00px;top:412.34px;font-size:12px;color:#20b2aa;">Net lots</div>
<div class="t" style="left:473.30px;top:412.34px;font-size:12px;color:#20b2aa;">Profit</div>
<div class="t" style="left:23.40px;top:427.34px;font-size:12px;color:#20b2aa;">EURJPYm</div>
<div class="t" style="left:93.30px;top:427.34px;font-size:12px;color:#20b2aa;">5</div>
<div class="t" style="left:143.50px;top:427.34px;font-size:12px;color:#20b2aa;">0.48</div>
<div class="t" style="left:193.50px;top:427.34px;font-size:12px;color:#20b2aa;">110.291</div>
<div class="t" style="left:273.20px;top:427.34px;font-size:12px;color:#20b2aa;">0.00</div>
<div class="t" style="left:323.50px;top:427.34px;font-size:12px;color:#20b2aa;">0.000</div>
<div class="t" style="left:403.00px;top:427.34px;font-size:12px;color:#20b2aa;">0.48</div>
<div class="t" style="left:473.30px;top:427.34px;font-size:12px;color:#20b2aa;">-42.72</div>
<div class="t" style="left:23.40px;top:441.34px;font-size:12px;color:#20b2aa;">EURUSDm</div>
<div class="t" style="left:93.30px;top:441.34px;font-size:12px;color:#20b2aa;">5</div>
<div class="t" style="left:143.50px;top:441.34px;font-size:12px;color:#20b2aa;">0.00</div>
<div class="t" style="left:193.50px;top:441.34px;font-size:12px;color:#20b2aa;">0.00000</div>
<div class="t" style="left:273.20px;top:441.34px;font-size:12px;color:#20b2aa;">0.48</div>
<div class="t" style="left:323.50px;top:441.34px;font-size:12px;color:#20b2aa;">1.42136</div>
<div class="t" style="left:403.00px;top:441.34px;font-size:12px;color:#20b2aa;">-0.48</div>
<div class="t" style="left:473.30px;top:441.34px;font-size:12px;color:#20b2aa;">12.72</div>
<div class="t" style="left:23.40px;top:455.34px;font-size:12px;color:#20b2aa;">GBPJPYm</div>
<div class="t" style="left:93.30px;top:455.34px;font-size:12px;color:#20b2aa;">5</div>
<div class="t" style="left:143.50px;top:455.34px;font-size:12px;color:#20b2aa;">0.00</div>
<div class="t" style="left:193.50px;top:455.34px;font-size:12px;color:#20b2aa;">0.000</div>
<div class="t" style="left:273.20px;top:455.34px;font-size:12px;color:#20b2aa;">0.48</div>
<div class="t" style="left:323.50px;top:455.34px;font-size:12px;color:#20b2aa;">126.747</div>
<div class="t" style="left:403.00px;top:455.34px;font-size:12px;color:#20b2aa;">-0.48</div>
<div class="t" style="left:473.30px;top:455.34px;font-size:12px;color:#20b2aa;">51.13</div>
<div class="t" style="left:23.40px;top:469.34px;font-size:12px;color:#20b2aa;">GBPUSDm</div>
<div class="t" style="left:93.30px;top:469.34px;font-size:12px;color:#20b2aa;">4</div>
<div class="t" style="left:143.50px;top:469.34px;font-size:12px;color:#20b2aa;">0.32</div>
<div class="t" style="left:193.50px;top:469.34px;font-size:12px;color:#20b2aa;">1.63784</div>
<div class="t" style="left:273.20px;top:469.34px;font-size:12px;color:#20b2aa;">0.00</div>
<div class="t" style="left:323.50px;top:469.34px;font-size:12px;color:#20b2aa;">0.00000</div>
<div class="t" style="left:403.00px;top:469.34px;font-size:12px;color:#20b2aa;">0.32</div>
<div class="t" style="left:473.30px;top:469.34px;font-size:12px;color:#20b2aa;">-28.79</div>
<div class="t" style="left:1890.00px;top:398.46px;font-size:9.5px;color:#fff;">0</div>
<div class="t" style="left:1890.00px;top:495.46px;font-size:9.5px;color:#fff;">0</div>
<div class="t" style="left:17.50px;top:513.96px;font-size:9.5px;color:#fff;transform:scaleX(0.9873);">Total Equity Balance 1478.25 1485.91</div>
<svg width="1936" height="1096" shape-rendering="crispEdges"><line x1="13" y1="576.5" x2="1886" y2="576.5" stroke="#4682b4" stroke-width="1" stroke-dasharray="3 3"/><rect x="317" y="529" width="1553" height="2" fill="#ff4500"/><polyline points="317.2,530.2 324.5,535.2 332.7,536.9 342,545.1 349.3,540.6 357.5,543.1 372,548.8 376.1,548.8 382.3,546.2 390.6,545.5 397.8,542 405,536.4 411.2,538.9 422.6,538.9 429.8,544.1 438.1,538.9 444.3,537.5 453.6,537.5 461.9,530.7 467,532.7 480.5,532.7 485.6,531.3 493.9,530.7 503.2,530.7 516.6,537.3 525.9,527.6 532.1,531.7 543.5,535.8 555.9,542 565.2,536.4 572.4,541 582.7,538.9 590,538.9 605.5,525.5 619.9,531.7 629.2,536.9 636.4,534.8 645.7,532.7 654,522.8 661.2,521.4 669.5,520.7 676.7,516.6 685,528.6 694.3,520.7 702.6,520.7 708.3,525.5 716.5,536.9 722.7,536.2 731,534.8 740.3,538.9 748.6,538.9 756.8,545.1 765.1,561.7 773.3,562.1 778.5,563.1 788.8,563.1 797.1,572 804.3,594.7 812.6,593.7 820.9,615 829.1,610.2 837.4,629.8 844.6,640.8 852.9,639.5 861.2,634.4 869.4,627.8 877.7,628.2 884.9,628.8 893.2,635 901.4,645.7 908.7,645.7 918,645.7 925.2,653 933.5,643.3 940.7,630.9 950,631.9 957.2,611.7 965.5,621.2 973.8,610.8 983.1,610.8 991.3,610.8 997.5,613.3 1005.8,622.6 1014,634 1022.3,634 1030.6,627.8 1038.8,622 1045,618.9 1065.7,618.9 1077.1,616.4 1085.3,607.5 1092.6,613.3 1099.3,618.5 1109.6,625.7 1116.9,622.6 1125.1,639.8 1133.4,636 1141.7,626.1 1149.9,624.7 1157.1,603 1165.4,607.5 1172.6,635 1180.9,630.5 1189.2,634 1197.4,621 1204.7,618.5 1214,610.8 1222.2,622.6 1229.5,632.9 1236.7,638.1 1246,638.1 1253.2,646 1261.5,635 1268.7,630.9 1277,640.2 1285.2,634 1293.5,634 1301.8,643.3 1309,633.6 1317.3,603 1324.5,607.7 1336.9,607.7 1339,606.7 1350.3,606.7 1357.6,603 1364.8,599.3 1373.1,592.6 1381.3,598.8 1388.6,598.8 1397.9,608.1 1404,620.1 1414.4,620.1 1420.6,614.8 1428.9,610.8 1436.1,613.3 1444.3,617 1452.6,613.9 1461.9,613.9 1469.1,605 1476.4,607.1 1484.6,611.7 1485.2,611.9 1493.4,596.8 1501.7,611.9 1508.9,610.6 1517.2,606.1 1525.5,598.4 1533.7,590.6 1541,593.3 1549.2,606.1 1557.5,601.3 1565.7,606.1 1574,596.4 1581.2,589.5 1589.5,597.8 1597.8,600.3 1606,606.5 1614.3,608.1 1622.6,604.4 1630.8,604 1639.1,603 1644.3,603 1651.5,605.7 1670.1,605.7 1677.3,601.9 1685.6,598.8 1693.8,606.1 1701.1,600.9 1710.4,601.9 1718.6,597.8 1725.9,587.5 1733.1,593.3 1741.4,583.3 1749.6,590.2 1757.9,585.4 1766.2,581.3 1774.4,581.3 1781.7,588.9 1788.9,581.9 1797.1,601.9 1806.4,601.9 1813.1,610.6 1820.9,592.2 1829.2,589.5 1836.4,590 1845.7,595.7 1852.9,558.6 1862.2,566.4 1869.5,575.7" fill="none" stroke="#ffff00" stroke-width="2.2" stroke-linejoin="round" shape-rendering="crispEdges"/></svg>
<div class="t" style="left:1890.00px;top:510.96px;font-size:9.5px;color:#fff;">1489.2</div>
<div class="a" style="left:1888px;top:570px;width:38px;height:11px;background:#4a86c4;overflow:hidden"><div class="t" style="left:4px;top:1.3px;font-size:10px;color:#000">1478.25</div></div>
<div class="t" style="left:1890.00px;top:648.46px;font-size:9.5px;color:#fff;">1464.55</div>
<div class="t" style="left:17.00px;top:667.96px;font-size:9.5px;color:#fff;transform:scaleX(0.9775);">SOK 19260 3.7357</div>
<div class="t" style="left:333.00px;top:667.27px;font-size:11.5px;color:#ff0000;font-weight:700;transform:scaleX(0.9760);">GBPUSDm</div>
<div class="t" style="left:403.00px;top:667.27px;font-size:11.5px;color:#ff0000;font-weight:700;transform:scaleX(1.0313);">USDJPYm</div>
<div class="t" style="left:473.60px;top:667.27px;font-size:11.5px;color:#ff0000;font-weight:700;transform:scaleX(1.0313);">USDJPYm</div>
<div class="t" style="left:543.00px;top:667.27px;font-size:11.5px;color:#ff0000;font-weight:700;transform:scaleX(1.0288);">GBPJPY</div>
<div class="t" style="left:613.00px;top:667.27px;font-size:11.5px;color:#ff0000;font-weight:700;transform:scaleX(1.0313);">EURJPYm</div>
<div class="t" style="left:683.60px;top:667.27px;font-size:11.5px;color:#ff0000;font-weight:700;transform:scaleX(1.0313);">USDJPYm</div>
<div class="t" style="left:753.60px;top:667.27px;font-size:11.5px;color:#ff0000;font-weight:700;transform:scaleX(1.0313);">USDJPYm</div>
<div class="t" style="left:823.00px;top:667.27px;font-size:11.5px;color:#ff0000;font-weight:700;transform:scaleX(0.9866);">EURUSDm</div>
<svg width="1936" height="1096"><line x1="13" y1="679.5" x2="1886" y2="679.5" stroke="#c8c8c8" stroke-width="1" stroke-dasharray="3 3" shape-rendering="crispEdges"/><line x1="13" y1="735.5" x2="1886" y2="735.5" stroke="#c8c8c8" stroke-width="1" stroke-dasharray="3 3" shape-rendering="crispEdges"/><polyline points="12.9,761.3 20.9,758.4 29.4,769.1 36.7,765.5 45.2,759.6 53.7,768.6 61,760.6 69.5,772.2 77.5,779.5 85.3,768.6 93.8,769.3 101,770.5 109.5,766.7 118,770.5 126.5,769.3 133.8,770.5 142.3,768.6 149.6,765.7 156.9,766.7 165.4,762.5 173.9,761.3 182.4,752.8 189.7,758.4 198.2,765.5 206.7,763.3 213.9,763.3 223.6,760.1 228.5,758.4 240.6,758.4 245.5,759.6 252.8,757.7 262.5,757.7 269.8,754.5 278.3,747.5 285.6,744.8 292.8,739 301.3,733.4 311,735.3 317.1,735.3 325.6,727.3 334.1,718.8 341.4,714.5 351.1,720.8 357.2,723.2 365.7,714.7 371.7,713.5 379,714.5 387.5,717.6 396,721.3 405.7,726.6 414.2,725.6 421.5,726.9 430,719.6 437.3,722.5 445.8,723.2 453.1,720.5 462.8,725.4 468.9,724.4 478.5,728.1 485.8,730.2 493.1,730.2 501.6,715.2 508.8,712.3 517.3,706.7 525.8,703.5 534.3,708.4 542.8,709.1 551.3,711.6 557.4,714.5 565.4,702.3 573.2,714 581.7,716.4 589,704.8 597.5,694.6 606,699.4 613.2,697 621.7,691.4 629,695.1 637.5,689.2 644.8,688 653.3,692.6 661.8,689.2 676.4,689.2 684.9,683.6 699.4,686.5 707.9,684.8 717.6,684.4 724.9,680.5 733.4,693.3 740.7,679.5 749.2,680.5 756.5,677.6 765,688 773.5,690.2 780.8,675.1 788,671.5 796.5,672.7 805,680 812.3,681.9 820.8,698.2 829.3,699.9 837.8,704.8 845.1,707.4 853.6,705.5 869.4,702.3 877.9,703.1 886.4,704.3 893.6,713.3 902.1,716.4 909.4,715.2 916.7,713.5 925.2,716.4 932.5,711.6 939.7,708.6 949.4,706.2 957.9,698.7 965.9,703.5 973.2,688 981,690.2 989.5,686.5 996.8,689.2 1005.3,693.8 1013.8,697.5 1019.8,698.7 1029.5,698.7 1038,694.1 1046.5,692.1 1055,691.4 1062.3,691.4 1069.6,689.2 1078.1,688 1086.6,686.5 1095.1,687.3 1102.4,690.9 1109.7,697.7 1116.9,694.6 1125.4,699.4 1133.9,699.4 1142.4,696.3 1149.7,694.1 1157.5,685.3 1165.5,693.3 1174,701.4 1182.5,702.3 1189.8,701.1 1198.3,697 1206.8,693.3 1213.6,689.2 1222.6,697.7 1231.1,700.6 1237.1,702.3 1245.6,701.4 1254.1,705.5 1262.6,701.8 1269.9,700.6 1278.4,704.3 1285.7,702.3 1294.2,701.4 1301.9,707.4 1309.9,704.3 1317.2,692.6 1325.7,693.3 1333,691.6 1341.5,690.4 1350,692.6 1357.3,691.4 1365.8,688.5 1375.5,688.5 1384,690.9 1388.8,692.6 1397.6,687.6 1403.9,686.3 1412.8,687.6 1421.6,688.3 1430.5,687 1438.1,684.5 1446.9,686.3 1457.1,686.3 1463.4,685.3 1471,685.8 1478.6,687.6 1496.3,687.6 1501.4,688.3 1509,686.5 1516.5,683.8 1525.4,678.7 1534.3,683.2 1541.9,685 1549.5,688.8 1557,677.7 1565.9,690.3 1573.5,689.1 1582.4,686.5 1590,687.6 1597.5,685.8 1605.1,684.5 1614,688.3 1620.3,687.6 1627.9,689.1 1635.5,690.1 1649.4,690.3 1658.3,692.1 1670.9,692.1 1678.5,690.1 1685.6,678.7 1693.7,693.4 1701.3,691.6 1708.9,693.4 1717.8,693.4 1725.4,690.3 1733,691.3 1741.8,687 1749.4,685.3 1757,684.5 1764.6,683.2 1773.4,681.2 1782.3,685.3 1789.9,682.5 1797.5,684.5 1805.1,696.7 1813.2,700.5 1821.5,697.2 1829.1,698.4 1838,696.4 1845.6,695.9 1853.2,691.3 1861.3,686.5 1868.4,692.6" fill="none" stroke="#ff0000" stroke-width="1" shape-rendering="crispEdges"/><path d="M13 779 v6 h6z" fill="#7890a8"/></svg>
<div class="t" style="left:1890.00px;top:664.56px;font-size:9.5px;color:#fff;">6.3576</div>
<div class="t" style="left:1890.00px;top:673.36px;font-size:9.5px;color:#fff;">5</div>
<div class="t" style="left:1890.00px;top:729.46px;font-size:9.5px;color:#fff;">0.00</div>
<div class="t" style="left:1890.00px;top:772.96px;font-size:9.5px;color:#fff;">-4.3332</div>
<div class="t" style="left:12.00px;top:789.66px;font-size:9.5px;color:#fff;transform:scaleX(0.9939);">8 Aug 2011</div>
<div class="t" style="left:76.00px;top:789.66px;font-size:9.5px;color:#fff;transform:scaleX(1.0031);">8 Aug 07:05</div>
<div class="t" style="left:140.00px;top:789.66px;font-size:9.5px;color:#fff;transform:scaleX(1.0031);">8 Aug 07:45</div>
<div class="t" style="left:204.00px;top:789.66px;font-size:9.5px;color:#fff;transform:scaleX(1.0031);">8 Aug 08:25</div>
<div class="t" style="left:268.00px;top:789.66px;font-size:9.5px;color:#fff;transform:scaleX(1.0031);">8 Aug 09:05</div>
<div class="t" style="left:332.00px;top:789.66px;font-size:9.5px;color:#fff;transform:scaleX(1.0031);">8 Aug 09:45</div>
<div class="t" style="left:396.00px;top:789.66px;font-size:9.5px;color:#fff;transform:scaleX(1.0031);">8 Aug 10:25</div>
<div class="t" style="left:460.00px;top:789.66px;font-size:9.5px;color:#fff;transform:scaleX(1.0171);">8 Aug 11:05</div>
<div class="t" style="left:524.00px;top:789.66px;font-size:9.5px;color:#fff;transform:scaleX(1.0171);">8 Aug 11:45</div>
<div class="t" style="left:588.00px;top:789.66px;font-size:9.5px;color:#fff;transform:scaleX(1.0031);">8 Aug 12:25</div>
<div class="t" style="left:652.00px;top:789.66px;font-size:9.5px;color:#fff;transform:scaleX(1.0031);">8 Aug 13:05</div>
<div class="t" style="left:716.00px;top:789.66px;font-size:9.5px;color:#fff;transform:scaleX(1.0031);">8 Aug 13:45</div>
<div class="t" style="left:780.00px;top:789.66px;font-size:9.5px;color:#fff;transform:scaleX(1.0031);">8 Aug 14:25</div>
<div class="t" style="left:844.00px;top:789.66px;font-size:9.5px;color:#fff;transform:scaleX(1.0031);">8 Aug 15:05</div>
<div class="t" style="left:908.00px;top:789.66px;font-size:9.5px;color:#fff;transform:scaleX(1.0031);">8 Aug 15:45</div>
<div class="t" style="left:972.00px;top:789.66px;font-size:9.5px;color:#fff;transform:scaleX(1.0031);">8 Aug 16:25</div>
<div class="t" style="left:1036.00px;top:789.66px;font-size:9.5px;color:#fff;transform:scaleX(1.0031);">8 Aug 17:05</div>
<div class="t" style="left:1100.00px;top:789.66px;font-size:9.5px;color:#fff;transform:scaleX(1.0031);">8 Aug 17:45</div>
<div class="t" style="left:1164.00px;top:789.66px;font-size:9.5px;color:#fff;transform:scaleX(1.0031);">8 Aug 18:25</div>
<div class="t" style="left:1228.00px;top:789.66px;font-size:9.5px;color:#fff;transform:scaleX(1.0031);">8 Aug 19:05</div>
<div class="t" style="left:1292.00px;top:789.66px;font-size:9.5px;color:#fff;transform:scaleX(1.0031);">8 Aug 19:45</div>
<div class="t" style="left:1356.00px;top:789.66px;font-size:9.5px;color:#fff;transform:scaleX(1.0031);">8 Aug 20:25</div>
<div class="t" style="left:1420.00px;top:789.66px;font-size:9.5px;color:#fff;transform:scaleX(1.0031);">8 Aug 21:08</div>
<div class="t" style="left:1484.00px;top:789.66px;font-size:9.5px;color:#fff;transform:scaleX(1.0031);">8 Aug 21:48</div>
<div class="t" style="left:1548.00px;top:789.66px;font-size:9.5px;color:#fff;transform:scaleX(1.0031);">8 Aug 22:28</div>
<div class="t" style="left:1612.00px;top:789.66px;font-size:9.5px;color:#fff;transform:scaleX(1.0031);">8 Aug 23:08</div>
<div class="t" style="left:1676.00px;top:789.66px;font-size:9.5px;color:#fff;transform:scaleX(1.0031);">8 Aug 23:48</div>
<div class="t" style="left:1740.00px;top:789.66px;font-size:9.5px;color:#fff;transform:scaleX(1.0031);">9 Aug 00:25</div>
<div class="t" style="left:1804.00px;top:789.66px;font-size:9.5px;color:#fff;transform:scaleX(1.0031);">9 Aug 01:05</div>
<div class="t" style="left:1868.00px;top:789.66px;font-size:9.5px;color:#fff;transform:scaleX(1.0031);">9 Aug 01:45</div>
<div class="a" style="left:8px;top:803px;width:1920px;height:23px;background:#f0f0f0"></div>
<div class="a" style="left:10px;top:803px;width:1917px;height:3px;background:#fafafa"></div>
<div class="a" style="left:99px;top:806px;width:1828px;height:1px;background:#000"></div>
<div class="a" style="left:8px;top:806px;width:2px;height:18px;background:#7a7a7a"></div>
<div class="a" style="left:12px;top:803px;width:88px;height:21px;background:#fff;border-left:1px solid #000;border-bottom:1px solid #000;border-right:1px solid #000;border-top:none"></div>
<div class="a" style="left:13px;top:803px;width:86px;height:3px;background:#fafafa"></div>
<div class="t" style="left:22.00px;top:808.69px;font-size:11px;color:#000;transform:scaleX(0.8924);">GBPUSDm,M5</div>
<div class="t" style="left:110.00px;top:808.69px;font-size:11px;color:#6a7a8a;transform:scaleX(0.9060);">EURUSDm,M5</div>
<div class="a" style="left:188px;top:808px;width:1px;height:12px;background:#404040"></div>
<svg width="1936" height="1096"><path d="M1904 811 l-3 4 3 4z M1916 811 l3 4 -3 4z" fill="#a0a0a0"/></svg>
<div class="a" style="left:8px;top:825px;width:1920px;height:1px;background:#fff"></div>
<div class="a" style="left:8px;top:825px;width:1920px;height:241px;background:#f0f0f0"></div>
<div class="t" style="left:12.00px;top:827.00px;font-size:13px;color:#000;font-weight:700;">×</div>
<div class="a" style="left:9px;top:843px;width:13px;height:220px;background:linear-gradient(#d5e2f0,#c2d3e8)"></div>
<div class="a" style="left:23px;top:829px;width:1902px;height:214px;background:#fff;border:1px solid #a0a0a0"></div>
<div class="a" style="left:24px;top:830px;width:1883px;height:22px;background:linear-gradient(#ffffff,#f1f2f5)"></div>
<div class="a" style="left:24px;top:852px;width:1883px;height:1px;background:#d5d5d5"></div>
<div class="a" style="left:24px;top:853px;width:1883px;height:1px;background:#fff"></div>
<div class="a" style="left:208px;top:830px;width:1px;height:22px;background:#e0e2e6"></div>
<div class="a" style="left:524px;top:830px;width:1px;height:22px;background:#e0e2e6"></div>
<div class="a" style="left:653px;top:830px;width:1px;height:22px;background:#e0e2e6"></div>
<div class="a" style="left:753px;top:830px;width:1px;height:22px;background:#e0e2e6"></div>
<div class="a" style="left:882px;top:830px;width:1px;height:22px;background:#e0e2e6"></div>
<div class="a" style="left:1025px;top:830px;width:1px;height:22px;background:#e0e2e6"></div>
<div class="a" style="left:1168px;top:830px;width:1px;height:22px;background:#e0e2e6"></div>
<div class="a" style="left:1311px;top:830px;width:1px;height:22px;background:#e0e2e6"></div>
<div class="a" style="left:1454px;top:830px;width:1px;height:22px;background:#e0e2e6"></div>
<div class="a" style="left:1597px;top:830px;width:1px;height:22px;background:#e0e2e6"></div>
<div class="a" style="left:1740px;top:830px;width:1px;height:22px;background:#e0e2e6"></div>
<div class="a" style="left:1907px;top:830px;width:1px;height:22px;background:#e0e2e6"></div>
<div class="t" style="left:31.00px;top:837.27px;font-size:11.5px;color:#000;">Pokyn</div>
<div class="t" style="left:479.68px;top:837.27px;font-size:11.5px;color:#000;">Èas</div>
<div class="t" style="left:625.46px;top:837.27px;font-size:11.5px;color:#000;">Typ</div>
<div class="t" style="left:726.62px;top:837.27px;font-size:11.5px;color:#000;">Lotù</div>
<div class="t" style="left:840.65px;top:837.27px;font-size:11.5px;color:#000;">Symbol</div>
<div class="t" style="left:993.51px;top:837.27px;font-size:11.5px;color:#000;">Cena</div>
<div class="t" style="left:1087.94px;top:837.27px;font-size:11.5px;color:#000;">Zastavení ztrát</div>
<div class="t" style="left:1230.31px;top:837.27px;font-size:11.5px;color:#000;">Realizovat zisk</div>
<div class="t" style="left:1422.51px;top:837.27px;font-size:11.5px;color:#000;">Cena</div>
<div class="t" style="left:1554.65px;top:837.27px;font-size:11.5px;color:#000;">Provize</div>
<div class="t" style="left:1707.23px;top:837.27px;font-size:11.5px;color:#000;">Swap</div>
<div class="t" style="left:1879.92px;top:837.27px;font-size:11.5px;color:#000;">Zisk</div>
<svg width="1936" height="1096"><path d="M513.5 848.5 l4 -7 l2 7" stroke="#c0c0c0" fill="none"/></svg>
<div class="a" style="left:24px;top:854px;width:1883px;height:189px;overflow:hidden">
<div class="a" style="left:0px;top:0px;width:1883px;height:20px;background:#ebebeb"></div>
<div class="a" style="left:0px;top:20px;width:1883px;height:20px;background:#ffffff"></div>
<div class="a" style="left:0px;top:40px;width:1883px;height:20px;background:#ebebeb"></div>
<div class="a" style="left:0px;top:60px;width:1883px;height:20px;background:#ffffff"></div>
<div class="a" style="left:0px;top:80px;width:1883px;height:20px;background:#ebebeb"></div>
<div class="a" style="left:0px;top:100px;width:1883px;height:20px;background:#ffffff"></div>
<div class="a" style="left:0px;top:120px;width:1883px;height:20px;background:#c8c8c8"></div>
<div class="a" style="left:0px;top:140px;width:1883px;height:20px;background:#ffffff"></div>
<div class="a" style="left:0px;top:160px;width:1883px;height:20px;background:#ebebeb"></div>
<div class="a" style="left:0px;top:180px;width:1883px;height:20px;background:#ffffff"></div>
<div class="a" style="left:0px;top:20px;width:1883px;height:1px;background:#c9c9c9"></div>
<div class="a" style="left:0px;top:40px;width:1883px;height:1px;background:#c9c9c9"></div>
<div class="a" style="left:0px;top:60px;width:1883px;height:1px;background:#c9c9c9"></div>
<div class="a" style="left:0px;top:80px;width:1883px;height:1px;background:#c9c9c9"></div>
<div class="a" style="left:0px;top:100px;width:1883px;height:1px;background:#c9c9c9"></div>
<div class="a" style="left:0px;top:120px;width:1883px;height:1px;background:#c9c9c9"></div>
<div class="a" style="left:0px;top:140px;width:1883px;height:1px;background:#c9c9c9"></div>
<div class="a" style="left:0px;top:160px;width:1883px;height:1px;background:#c9c9c9"></div>
<div class="a" style="left:0px;top:180px;width:1883px;height:1px;background:#c9c9c9"></div>
<div class="a" style="left:0px;top:200px;width:1883px;height:1px;background:#c9c9c9"></div>
<div class="a" style="left:184px;top:0px;width:1px;height:20px;background:#cdcdcd"></div>
<div class="a" style="left:500px;top:0px;width:1px;height:20px;background:#cdcdcd"></div>
<div class="a" style="left:629px;top:0px;width:1px;height:20px;background:#cdcdcd"></div>
<div class="a" style="left:729px;top:0px;width:1px;height:20px;background:#cdcdcd"></div>
<div class="a" style="left:858px;top:0px;width:1px;height:20px;background:#cdcdcd"></div>
<div class="a" style="left:1001px;top:0px;width:1px;height:20px;background:#cdcdcd"></div>
<div class="a" style="left:1144px;top:0px;width:1px;height:20px;background:#cdcdcd"></div>
<div class="a" style="left:1287px;top:0px;width:1px;height:20px;background:#cdcdcd"></div>
<div class="a" style="left:1430px;top:0px;width:1px;height:20px;background:#cdcdcd"></div>
<div class="a" style="left:1573px;top:0px;width:1px;height:20px;background:#cdcdcd"></div>
<div class="a" style="left:1716px;top:0px;width:1px;height:20px;background:#cdcdcd"></div>
<div class="a" style="left:184px;top:20px;width:1px;height:20px;background:#cdcdcd"></div>
<div class="a" style="left:500px;top:20px;width:1px;height:20px;background:#cdcdcd"></div>
<div class="a" style="left:629px;top:20px;width:1px;height:20px;background:#cdcdcd"></div>
<div class="a" style="left:729px;top:20px;width:1px;height:20px;background:#cdcdcd"></div>
<div class="a" style="left:858px;top:20px;width:1px;height:20px;background:#cdcdcd"></div>
<div class="a" style="left:1001px;top:20px;width:1px;height:20px;background:#cdcdcd"></div>
<div class="a" style="left:1144px;top:20px;width:1px;height:20px;background:#cdcdcd"></div>
<div class="a" style="left:1287px;top:20px;width:1px;height:20px;background:#cdcdcd"></div>
<div class="a" style="left:1430px;top:20px;width:1px;height:20px;background:#cdcdcd"></div>
<div class="a" style="left:1573px;top:20px;width:1px;height:20px;background:#cdcdcd"></div>
<div class="a" style="left:1716px;top:20px;width:1px;height:20px;background:#cdcdcd"></div>
<div class="a" style="left:184px;top:40px;width:1px;height:20px;background:#cdcdcd"></div>
<div class="a" style="left:500px;top:40px;width:1px;height:20px;background:#cdcdcd"></div>
<div class="a" style="left:629px;top:40px;width:1px;height:20px;background:#cdcdcd"></div>
<div class="a" style="left:729px;top:40px;width:1px;height:20px;background:#cdcdcd"></div>
<div class="a" style="left:858px;top:40px;width:1px;height:20px;background:#cdcdcd"></div>
<div class="a" style="left:1001px;top:40px;width:1px;height:20px;background:#cdcdcd"></div>
<div class="a" style="left:1144px;top:40px;width:1px;height:20px;background:#cdcdcd"></div>
<div class="a" style="left:1287px;top:40px;width:1px;height:20px;background:#cdcdcd"></div>
<div class="a" style="left:1430px;top:40px;width:1px;height:20px;background:#cdcdcd"></div>
<div class="a" style="left:1573px;top:40px;width:1px;height:20px;background:#cdcdcd"></div>
<div class="a" style="left:1716px;top:40px;width:1px;height:20px;background:#cdcdcd"></div>
<div class="a" style="left:184px;top:60px;width:1px;height:20px;background:#cdcdcd"></div>
<div class="a" style="left:500px;top:60px;width:1px;height:20px;background:#cdcdcd"></div>
<div class="a" style="left:629px;top:60px;width:1px;height:20px;background:#cdcdcd"></div>
<div class="a" style="left:729px;top:60px;width:1px;height:20px;background:#cdcdcd"></div>
<div class="a" style="left:858px;top:60px;width:1px;height:20px;background:#cdcdcd"></div>
<div class="a" style="left:1001px;top:60px;width:1px;height:20px;background:#cdcdcd"></div>
<div class="a" style="left:1144px;top:60px;width:1px;height:20px;background:#cdcdcd"></div>
<div class="a" style="left:1287px;top:60px;width:1px;height:20px;background:#cdcdcd"></div>
<div class="a" style="left:1430px;top:60px;width:1px;height:20px;background:#cdcdcd"></div>
<div class="a" style="left:1573px;top:60px;width:1px;height:20px;background:#cdcdcd"></div>
<div class="a" style="left:1716px;top:60px;width:1px;height:20px;background:#cdcdcd"></div>
<div class="a" style="left:184px;top:80px;width:1px;height:20px;background:#cdcdcd"></div>
<div class="a" style="left:500px;top:80px;width:1px;height:20px;background:#cdcdcd"></div>
<div class="a" style="left:629px;top:80px;width:1px;height:20px;background:#cdcdcd"></div>
<div class="a" style="left:729px;top:80px;width:1px;height:20px;background:#cdcdcd"></div>
<div class="a" style="left:858px;top:80px;width:1px;height:20px;background:#cdcdcd"></div>
<div class="a" style="left:1001px;top:80px;width:1px;height:20px;background:#cdcdcd"></div>
<div class="a" style="left:1144px;top:80px;width:1px;height:20px;background:#cdcdcd"></div>
<div class="a" style="left:1287px;top:80px;width:1px;height:20px;background:#cdcdcd"></div>
<div class="a" style="left:1430px;top:80px;width:1px;height:20px;background:#cdcdcd"></div>
<div class="a" style="left:1573px;top:80px;width:1px;height:20px;background:#cdcdcd"></div>
<div class="a" style="left:1716px;top:80px;width:1px;height:20px;background:#cdcdcd"></div>
<div class="a" style="left:184px;top:100px;width:1px;height:20px;background:#cdcdcd"></div>
<div class="a" style="left:500px;top:100px;width:1px;height:20px;background:#cdcdcd"></div>
<div class="a" style="left:629px;top:100px;width:1px;height:20px;background:#cdcdcd"></div>
<div class="a" style="left:729px;top:100px;width:1px;height:20px;background:#cdcdcd"></div>
<div class="a" style="left:858px;top:100px;width:1px;height:20px;background:#cdcdcd"></div>
<div class="a" style="left:1001px;top:100px;width:1px;height:20px;background:#cdcdcd"></div>
<div class="a" style="left:1144px;top:100px;width:1px;height:20px;background:#cdcdcd"></div>
<div class="a" style="left:1287px;top:100px;width:1px;height:20px;background:#cdcdcd"></div>
<div class="a" style="left:1430px;top:100px;width:1px;height:20px;background:#cdcdcd"></div>
<div class="a" style="left:1573px;top:100px;width:1px;height:20px;background:#cdcdcd"></div>
<div class="a" style="left:1716px;top:100px;width:1px;height:20px;background:#cdcdcd"></div>
<div class="a" style="left:184px;top:140px;width:1px;height:20px;background:#cdcdcd"></div>
<div class="a" style="left:500px;top:140px;width:1px;height:20px;background:#cdcdcd"></div>
<div class="a" style="left:629px;top:140px;width:1px;height:20px;background:#cdcdcd"></div>
<div class="a" style="left:729px;top:140px;width:1px;height:20px;background:#cdcdcd"></div>
<div class="a" style="left:858px;top:140px;width:1px;height:20px;background:#cdcdcd"></div>
<div class="a" style="left:1001px;top:140px;width:1px;height:20px;background:#cdcdcd"></div>
<div class="a" style="left:1144px;top:140px;width:1px;height:20px;background:#cdcdcd"></div>
<div class="a" style="left:1287px;top:140px;width:1px;height:20px;background:#cdcdcd"></div>
<div class="a" style="left:1430px;top:140px;width:1px;height:20px;background:#cdcdcd"></div>
<div class="a" style="left:1716px;top:140px;width:1px;height:20px;background:#cdcdcd"></div>
<div class="a" style="left:184px;top:160px;width:1px;height:20px;background:#cdcdcd"></div>
<div class="a" style="left:500px;top:160px;width:1px;height:20px;background:#cdcdcd"></div>
<div class="a" style="left:629px;top:160px;width:1px;height:20px;background:#cdcdcd"></div>
<div class="a" style="left:729px;top:160px;width:1px;height:20px;background:#cdcdcd"></div>
<div class="a" style="left:858px;top:160px;width:1px;height:20px;background:#cdcdcd"></div>
<div class="a" style="left:1001px;top:160px;width:1px;height:20px;background:#cdcdcd"></div>
<div class="a" style="left:1144px;top:160px;width:1px;height:20px;background:#cdcdcd"></div>
<div class="a" style="left:1287px;top:160px;width:1px;height:20px;background:#cdcdcd"></div>
<div class="a" style="left:1430px;top:160px;width:1px;height:20px;background:#cdcdcd"></div>
<div class="a" style="left:1716px;top:160px;width:1px;height:20px;background:#cdcdcd"></div>
<div class="a" style="left:184px;top:180px;width:1px;height:20px;background:#cdcdcd"></div>
<div class="a" style="left:500px;top:180px;width:1px;height:20px;background:#cdcdcd"></div>
<div class="a" style="left:629px;top:180px;width:1px;height:20px;background:#cdcdcd"></div>
<div class="a" style="left:729px;top:180px;width:1px;height:20px;background:#cdcdcd"></div>
<div class="a" style="left:858px;top:180px;width:1px;height:20px;background:#cdcdcd"></div>
<div class="a" style="left:1001px;top:180px;width:1px;height:20px;background:#cdcdcd"></div>
<div class="a" style="left:1144px;top:180px;width:1px;height:20px;background:#cdcdcd"></div>
<div class="a" style="left:1287px;top:180px;width:1px;height:20px;background:#cdcdcd"></div>
<div class="a" style="left:1430px;top:180px;width:1px;height:20px;background:#cdcdcd"></div>
<div class="a" style="left:1716px;top:180px;width:1px;height:20px;background:#cdcdcd"></div>
<div class="a" style="left:3px;top:3px;width:11px;height:14px;background:linear-gradient(90deg,#fff,#e4e4e4);border:1px solid #555;border-radius:0 4px 0 0"></div>
<div class="a" style="left:10px;top:10px;width:7px;height:7px;background:radial-gradient(circle at 35% 35%,#fff 0,#f04a10 45%,#f04a10 100%);border-radius:50%"></div>
<div class="a" style="left:3px;top:23px;width:11px;height:14px;background:linear-gradient(90deg,#fff,#e4e4e4);border:1px solid #555;border-radius:0 4px 0 0"></div>
<div class="a" style="left:10px;top:30px;width:7px;height:7px;background:radial-gradient(circle at 35% 35%,#fff 0,#2a80d8 45%,#2a80d8 100%);border-radius:50%"></div>
<div class="a" style="left:3px;top:43px;width:11px;height:14px;background:linear-gradient(90deg,#fff,#e4e4e4);border:1px solid #555;border-radius:0 4px 0 0"></div>
<div class="a" style="left:10px;top:50px;width:7px;height:7px;background:radial-gradient(circle at 35% 35%,#fff 0,#f04a10 45%,#f04a10 100%);border-radius:50%"></div>
<div class="a" style="left:3px;top:63px;width:11px;height:14px;background:linear-gradient(90deg,#fff,#e4e4e4);border:1px solid #555;border-radius:0 4px 0 0"></div>
<div class="a" style="left:10px;top:70px;width:7px;height:7px;background:radial-gradient(circle at 35% 35%,#fff 0,#f04a10 45%,#f04a10 100%);border-radius:50%"></div>
<div class="a" style="left:3px;top:83px;width:11px;height:14px;background:linear-gradient(90deg,#fff,#e4e4e4);border:1px solid #555;border-radius:0 4px 0 0"></div>
<div class="a" style="left:10px;top:90px;width:7px;height:7px;background:radial-gradient(circle at 35% 35%,#fff 0,#f04a10 45%,#f04a10 100%);border-radius:50%"></div>
<div class="a" style="left:3px;top:103px;width:11px;height:14px;background:linear-gradient(90deg,#fff,#e4e4e4);border:1px solid #555;border-radius:0 4px 0 0"></div>
<div class="a" style="left:10px;top:110px;width:7px;height:7px;background:radial-gradient(circle at 35% 35%,#fff 0,#2a80d8 45%,#2a80d8 100%);border-radius:50%"></div>
<div class="a" style="left:3px;top:123px;width:12px;height:14px;background:#fff;border:1px solid #888"></div>
<svg width="1936" height="1096"><path d="M6 127 h6 l-3 5z" fill="#e03010"/><path d="M9 124 v4" stroke="#e03010" stroke-width="1.5"/></svg>
<div class="a" style="left:3px;top:143px;width:11px;height:14px;background:linear-gradient(90deg,#fff,#e4e4e4);border:1px solid #555;border-radius:0 4px 0 0"></div>
<div class="a" style="left:10px;top:150px;width:7px;height:7px;background:radial-gradient(circle at 35% 35%,#fff 0,#2a80d8 45%,#2a80d8 100%);border-radius:50%"></div>
<div class="a" style="left:3px;top:163px;width:11px;height:14px;background:linear-gradient(90deg,#fff,#e4e4e4);border:1px solid #555;border-radius:0 4px 0 0"></div>
<div class="a" style="left:10px;top:170px;width:7px;height:7px;background:radial-gradient(circle at 35% 35%,#fff 0,#2a80d8 45%,#2a80d8 100%);border-radius:50%"></div>
<div class="a" style="left:3px;top:183px;width:11px;height:14px;background:linear-gradient(90deg,#fff,#e4e4e4);border:1px solid #555;border-radius:0 4px 0 0"></div>
<div class="a" style="left:10px;top:190px;width:7px;height:7px;background:radial-gradient(circle at 35% 35%,#fff 0,#2a80d8 45%,#2a80d8 100%);border-radius:50%"></div>
<div class="t" style="left:25.00px;top:5.27px;font-size:11.5px;color:#000;transform:scaleX(0.9284);">41830435</div>
<div class="t" style="left:414.50px;top:5.27px;font-size:11.5px;color:#000;transform:scaleX(0.9360);">2011.08.08 12:48</div>
<div class="t" style="left:609.24px;top:5.27px;font-size:11.5px;color:#000;">sell</div>
<div class="t" style="left:703.62px;top:5.27px;font-size:11.5px;color:#000;">0.10</div>
<div class="t" style="left:813.03px;top:5.27px;font-size:11.5px;color:#000;">gbpjpym</div>
<div class="t" style="left:956.43px;top:5.27px;font-size:11.5px;color:#000;">127.214</div>
<div class="t" style="left:1112.22px;top:5.27px;font-size:11.5px;color:#000;">0.000</div>
<div class="t" style="left:1255.22px;top:5.27px;font-size:11.5px;color:#000;">0.000</div>
<div class="t" style="left:1385.43px;top:5.27px;font-size:11.5px;color:#000;">125.917</div>
<div class="t" style="left:1547.62px;top:5.27px;font-size:11.5px;color:#000;">0.00</div>
<div class="t" style="left:1686.79px;top:5.27px;font-size:11.5px;color:#000;">-0.13</div>
<div class="t" style="left:1850.22px;top:5.27px;font-size:11.5px;color:#000;">16.78</div>
<div class="t" style="left:25.00px;top:25.27px;font-size:11.5px;color:#000;transform:scaleX(0.9284);">41830404</div>
<div class="t" style="left:414.50px;top:25.27px;font-size:11.5px;color:#000;transform:scaleX(0.9360);">2011.08.08 13:00</div>
<div class="t" style="left:607.96px;top:25.27px;font-size:11.5px;color:#000;">buy</div>
<div class="t" style="left:703.62px;top:25.27px;font-size:11.5px;color:#000;">0.13</div>
<div class="t" style="left:815.60px;top:25.27px;font-size:11.5px;color:#000;">eurjpym</div>
<div class="t" style="left:957.28px;top:25.27px;font-size:11.5px;color:#000;">110.347</div>
<div class="t" style="left:1112.22px;top:25.27px;font-size:11.5px;color:#000;">0.000</div>
<div class="t" style="left:1255.22px;top:25.27px;font-size:11.5px;color:#000;">0.000</div>
<div class="t" style="left:1385.43px;top:25.27px;font-size:11.5px;color:#000;">109.605</div>
<div class="t" style="left:1547.62px;top:25.27px;font-size:11.5px;color:#000;">0.00</div>
<div class="t" style="left:1686.79px;top:25.27px;font-size:11.5px;color:#000;">-0.03</div>
<div class="t" style="left:1846.39px;top:25.27px;font-size:11.5px;color:#000;">-12.49</div>
<div class="t" style="left:25.00px;top:45.27px;font-size:11.5px;color:#000;transform:scaleX(0.9284);">41830437</div>
<div class="t" style="left:414.50px;top:45.27px;font-size:11.5px;color:#000;transform:scaleX(0.9360);">2011.08.08 14:17</div>
<div class="t" style="left:609.24px;top:45.27px;font-size:11.5px;color:#000;">sell</div>
<div class="t" style="left:703.62px;top:45.27px;font-size:11.5px;color:#000;">0.13</div>
<div class="t" style="left:813.03px;top:45.27px;font-size:11.5px;color:#000;">gbpjpym</div>
<div class="t" style="left:956.43px;top:45.27px;font-size:11.5px;color:#000;">126.812</div>
<div class="t" style="left:1112.22px;top:45.27px;font-size:11.5px;color:#000;">0.000</div>
<div class="t" style="left:1255.22px;top:45.27px;font-size:11.5px;color:#000;">0.000</div>
<div class="t" style="left:1385.43px;top:45.27px;font-size:11.5px;color:#000;">125.917</div>
<div class="t" style="left:1547.62px;top:45.27px;font-size:11.5px;color:#000;">0.00</div>
<div class="t" style="left:1686.79px;top:45.27px;font-size:11.5px;color:#000;">-0.17</div>
<div class="t" style="left:1850.22px;top:45.27px;font-size:11.5px;color:#000;">15.05</div>
<div class="t" style="left:25.00px;top:65.27px;font-size:11.5px;color:#000;transform:scaleX(0.9284);">41830423</div>
<div class="t" style="left:414.50px;top:65.27px;font-size:11.5px;color:#000;transform:scaleX(0.9360);">2011.08.08 14:33</div>
<div class="t" style="left:609.24px;top:65.27px;font-size:11.5px;color:#000;">sell</div>
<div class="t" style="left:703.62px;top:65.27px;font-size:11.5px;color:#000;">0.16</div>
<div class="t" style="left:811.76px;top:65.27px;font-size:11.5px;color:#000;">eurusdm</div>
<div class="t" style="left:956.43px;top:65.27px;font-size:11.5px;color:#000;">1.41394</div>
<div class="t" style="left:1099.43px;top:65.27px;font-size:11.5px;color:#000;">0.00000</div>
<div class="t" style="left:1242.43px;top:65.27px;font-size:11.5px;color:#000;">0.00000</div>
<div class="t" style="left:1385.43px;top:65.27px;font-size:11.5px;color:#000;">1.41863</div>
<div class="t" style="left:1547.62px;top:65.27px;font-size:11.5px;color:#000;">0.00</div>
<div class="t" style="left:1686.79px;top:65.27px;font-size:11.5px;color:#000;">-0.12</div>
<div class="t" style="left:1852.79px;top:65.27px;font-size:11.5px;color:#000;">-7.51</div>
<div class="t" style="left:25.00px;top:85.27px;font-size:11.5px;color:#000;transform:scaleX(0.9284);">41830439</div>
<div class="t" style="left:414.50px;top:85.27px;font-size:11.5px;color:#000;transform:scaleX(0.9360);">2011.08.09 01:01</div>
<div class="t" style="left:609.24px;top:85.27px;font-size:11.5px;color:#000;">sell</div>
<div class="t" style="left:703.62px;top:85.27px;font-size:11.5px;color:#000;">0.16</div>
<div class="t" style="left:813.03px;top:85.27px;font-size:11.5px;color:#000;">gbpjpym</div>
<div class="t" style="left:956.43px;top:85.27px;font-size:11.5px;color:#000;">126.008</div>
<div class="t" style="left:1112.22px;top:85.27px;font-size:11.5px;color:#000;">0.000</div>
<div class="t" style="left:1255.22px;top:85.27px;font-size:11.5px;color:#000;">0.000</div>
<div class="t" style="left:1385.43px;top:85.27px;font-size:11.5px;color:#000;">125.917</div>
<div class="t" style="left:1547.62px;top:85.27px;font-size:11.5px;color:#000;">0.00</div>
<div class="t" style="left:1690.62px;top:85.27px;font-size:11.5px;color:#000;">0.00</div>
<div class="t" style="left:1856.62px;top:85.27px;font-size:11.5px;color:#000;">1.88</div>
<div class="t" style="left:25.00px;top:105.27px;font-size:11.5px;color:#000;transform:scaleX(0.9284);">41830406</div>
<div class="t" style="left:414.50px;top:105.27px;font-size:11.5px;color:#000;transform:scaleX(0.9360);">2011.08.09 01:38</div>
<div class="t" style="left:607.96px;top:105.27px;font-size:11.5px;color:#000;">buy</div>
<div class="t" style="left:703.62px;top:105.27px;font-size:11.5px;color:#000;">0.16</div>
<div class="t" style="left:815.60px;top:105.27px;font-size:11.5px;color:#000;">eurjpym</div>
<div class="t" style="left:956.43px;top:105.27px;font-size:11.5px;color:#000;">109.563</div>
<div class="t" style="left:1112.22px;top:105.27px;font-size:11.5px;color:#000;">0.000</div>
<div class="t" style="left:1255.22px;top:105.27px;font-size:11.5px;color:#000;">0.000</div>
<div class="t" style="left:1385.43px;top:105.27px;font-size:11.5px;color:#000;">109.605</div>
<div class="t" style="left:1547.62px;top:105.27px;font-size:11.5px;color:#000;">0.00</div>
<div class="t" style="left:1690.62px;top:105.27px;font-size:11.5px;color:#000;">0.00</div>
<div class="t" style="left:1856.62px;top:105.27px;font-size:11.5px;color:#000;">0.87</div>
<div class="t" style="left:25.00px;top:125.27px;font-size:11.5px;color:#000;font-weight:700;transform:scaleX(0.9393);">Zùstatek: 1 485.91  Majetek: 1 478.25  Marže: 534.55  Dostupná marže: 943.70  Výška marže: 276.54%</div>
<div class="t" style="left:1852.79px;top:125.27px;font-size:11.5px;color:#000;font-weight:700;">-7.66</div>
<div class="t" style="left:25.00px;top:145.27px;font-size:11.5px;color:#000;transform:scaleX(0.9284);">41830380</div>
<div class="t" style="left:414.50px;top:145.27px;font-size:11.5px;color:#000;transform:scaleX(0.9360);">2011.08.08 09:39</div>
<div class="t" style="left:583.03px;top:145.27px;font-size:11.5px;color:#000;">buy stop</div>
<div class="t" style="left:703.62px;top:145.27px;font-size:11.5px;color:#000;">0.03</div>
<div class="t" style="left:809.19px;top:145.27px;font-size:11.5px;color:#000;">gbpusdm</div>
<div class="t" style="left:956.43px;top:145.27px;font-size:11.5px;color:#000;">1.64388</div>
<div class="t" style="left:1099.43px;top:145.27px;font-size:11.5px;color:#000;">0.00000</div>
<div class="t" style="left:1242.43px;top:145.27px;font-size:11.5px;color:#000;">0.00000</div>
<div class="t" style="left:1385.43px;top:145.27px;font-size:11.5px;color:#000;">1.62922</div>
<div class="t" style="left:25.00px;top:165.27px;font-size:11.5px;color:#000;transform:scaleX(0.9284);">41830382</div>
<div class="t" style="left:414.50px;top:165.27px;font-size:11.5px;color:#000;transform:scaleX(0.9360);">2011.08.08 09:39</div>
<div class="t" style="left:583.03px;top:165.27px;font-size:11.5px;color:#000;">buy stop</div>
<div class="t" style="left:703.62px;top:165.27px;font-size:11.5px;color:#000;">0.06</div>
<div class="t" style="left:809.19px;top:165.27px;font-size:11.5px;color:#000;">gbpusdm</div>
<div class="t" style="left:956.43px;top:165.27px;font-size:11.5px;color:#000;">1.64488</div>
<div class="t" style="left:1099.43px;top:165.27px;font-size:11.5px;color:#000;">0.00000</div>
<div class="t" style="left:1242.43px;top:165.27px;font-size:11.5px;color:#000;">0.00000</div>
<div class="t" style="left:1385.43px;top:165.27px;font-size:11.5px;color:#000;">1.62922</div>
<div class="t" style="left:25.00px;top:185.27px;font-size:11.5px;color:#000;transform:scaleX(0.9284);">41830384</div>
<div class="t" style="left:414.50px;top:185.27px;font-size:11.5px;color:#000;transform:scaleX(0.9360);">2011.08.08 09:39</div>
<div class="t" style="left:583.03px;top:185.27px;font-size:11.5px;color:#000;">buy stop</div>
<div class="t" style="left:703.62px;top:185.27px;font-size:11.5px;color:#000;">0.10</div>
<div class="t" style="left:809.19px;top:185.27px;font-size:11.5px;color:#000;">gbpusdm</div>
<div class="t" style="left:956.43px;top:185.27px;font-size:11.5px;color:#000;">1.64686</div>
<div class="t" style="left:1099.43px;top:185.27px;font-size:11.5px;color:#000;">0.00000</div>
<div class="t" style="left:1242.43px;top:185.27px;font-size:11.5px;color:#000;">0.00000</div>
<div class="t" style="left:1385.43px;top:185.27px;font-size:11.5px;color:#000;">1.62922</div>
</div>
<div class="a" style="left:1907px;top:830px;width:17px;height:212px;background:linear-gradient(90deg,#e8e8e8,#f4f4f4,#e8e8e8)"></div>
<svg width="1936" height="1096"><path d="M1912.5 841 l3.5-3.5 3.5 3.5z M1912.5 1035 l3.5 3.5 3.5-3.5z" fill="#404040"/></svg>
<div class="a" style="left:1909px;top:884px;width:14px;height:24px;background:linear-gradient(90deg,#f4f4f4,#dcdcdc);border:1px solid #999;border-radius:2px"></div>
<svg width="1936" height="1096"><path d="M1912.5 893.5 h7 M1912.5 895.5 h7 M1912.5 897.5 h7" stroke="#666"/></svg>
<div class="t" style="left:10px;top:1062px;font-size:11.5px;color:#5b6f8c;transform:rotate(-90deg) scaleX(0.98);transform-origin:0 0">Terminál</div>
<div class="a" style="left:23px;top:1043px;width:1902px;height:20px;background:#f0f0f0"></div>
<div class="a" style="left:23px;top:1043px;width:1902px;height:1px;background:#000"></div>
<div class="a" style="left:26px;top:1043px;width:57px;height:18px;background:#fff;border:1px solid #000;border-top:none;border-bottom-width:2px"></div>
<div class="t" style="left:35.00px;top:1047.27px;font-size:11.5px;color:#000;transform:scaleX(0.9186);">Obchod</div>
<div class="t" style="left:92.00px;top:1047.77px;font-size:11.5px;color:#6a7a8a;transform:scaleX(0.9449);">Historie úètu</div>
<div class="a" style="left:164px;top:1047px;width:1px;height:12px;background:#404040"></div>
<div class="t" style="left:173.60px;top:1047.77px;font-size:11.5px;color:#6a7a8a;transform:scaleX(0.9560);">Zprávy</div>
<div class="a" style="left:218px;top:1047px;width:1px;height:12px;background:#404040"></div>
<div class="t" style="left:227.60px;top:1047.77px;font-size:11.5px;color:#6a7a8a;transform:scaleX(0.9083);">Alarmy</div>
<div class="a" style="left:271px;top:1047px;width:1px;height:12px;background:#404040"></div>
<div class="t" style="left:280.00px;top:1047.77px;font-size:11.5px;color:#6a7a8a;transform:scaleX(0.9175);">Poštovní schránka</div>
<div class="a" style="left:378px;top:1047px;width:1px;height:12px;background:#404040"></div>
<div class="t" style="left:387.00px;top:1047.77px;font-size:11.5px;color:#6a7a8a;transform:scaleX(0.9429);">Strategie</div>
<div class="a" style="left:442px;top:1047px;width:1px;height:12px;background:#404040"></div>
<div class="t" style="left:451.00px;top:1047.77px;font-size:11.5px;color:#6a7a8a;transform:scaleX(0.8988);">Deník</div>
<div class="a" style="left:488px;top:1047px;width:1px;height:12px;background:#404040"></div>
<div class="a" style="left:8px;top:1066px;width:1920px;height:1px;background:#a0a0a0"></div>
<div class="a" style="left:8px;top:1067px;width:1920px;height:21px;background:#f0f0f0"></div>
<div class="t" style="left:10.00px;top:1074.27px;font-size:11.5px;color:#000;transform:scaleX(0.9769);">Pro pomoc, stisknìte F1</div>
<div class="a" style="left:1202px;top:1069px;width:1px;height:18px;background:#a0a0a0"></div>
<div class="a" style="left:1318px;top:1069px;width:1px;height:18px;background:#a0a0a0"></div>
<div class="a" style="left:1420px;top:1069px;width:1px;height:18px;background:#a0a0a0"></div>
<div class="a" style="left:1491px;top:1069px;width:1px;height:18px;background:#a0a0a0"></div>
<div class="a" style="left:1562px;top:1069px;width:1px;height:18px;background:#a0a0a0"></div>
<div class="a" style="left:1630px;top:1069px;width:1px;height:18px;background:#a0a0a0"></div>
<div class="a" style="left:1700px;top:1069px;width:1px;height:18px;background:#a0a0a0"></div>
<div class="a" style="left:1766px;top:1069px;width:1px;height:18px;background:#a0a0a0"></div>
<div class="t" style="left:1208.00px;top:1074.27px;font-size:11.5px;color:#000;transform:scaleX(1.0374);">Default</div>
<div class="t" style="left:1324.00px;top:1074.27px;font-size:11.5px;color:#000;transform:scaleX(0.9428);">2011.08.08 13:10</div>
<div class="t" style="left:1426.00px;top:1074.27px;font-size:11.5px;color:#000;transform:scaleX(0.9279);">O: 1.63404</div>
<div class="t" style="left:1497.00px;top:1074.27px;font-size:11.5px;color:#000;transform:scaleX(0.9384);">H: 1.63468</div>
<div class="t" style="left:1568.00px;top:1074.27px;font-size:11.5px;color:#000;transform:scaleX(0.9475);">L: 1.63383</div>
<div class="t" style="left:1636.00px;top:1074.27px;font-size:11.5px;color:#000;transform:scaleX(0.9384);">C: 1.63419</div>
<div class="t" style="left:1706.00px;top:1074.27px;font-size:11.5px;color:#000;transform:scaleX(0.9140);">V: 577</div>
<div class="t" style="left:1833.00px;top:1074.27px;font-size:11.5px;color:#000;transform:scaleX(0.9822);">62763/6 kb</div>
<svg width="1936" height="1096" shape-rendering="crispEdges"><rect x="1772" y="1072" width="2" height="14" fill="#3a8a2a"/><rect x="1775" y="1072" width="2" height="14" fill="#3a8a2a"/><rect x="1778" y="1072" width="2" height="14" fill="#3a8a2a"/><rect x="1781" y="1072" width="2" height="14" fill="#3a8a2a"/><rect x="1784" y="1072" width="2" height="14" fill="#3a8a2a"/><rect x="1787" y="1072" width="2" height="14" fill="#c03030"/><rect x="1790" y="1072" width="2" height="14" fill="#c03030"/><rect x="1793" y="1072" width="2" height="14" fill="#c03030"/><rect x="1796" y="1072" width="2" height="14" fill="#c03030"/></svg>
</body></html>
